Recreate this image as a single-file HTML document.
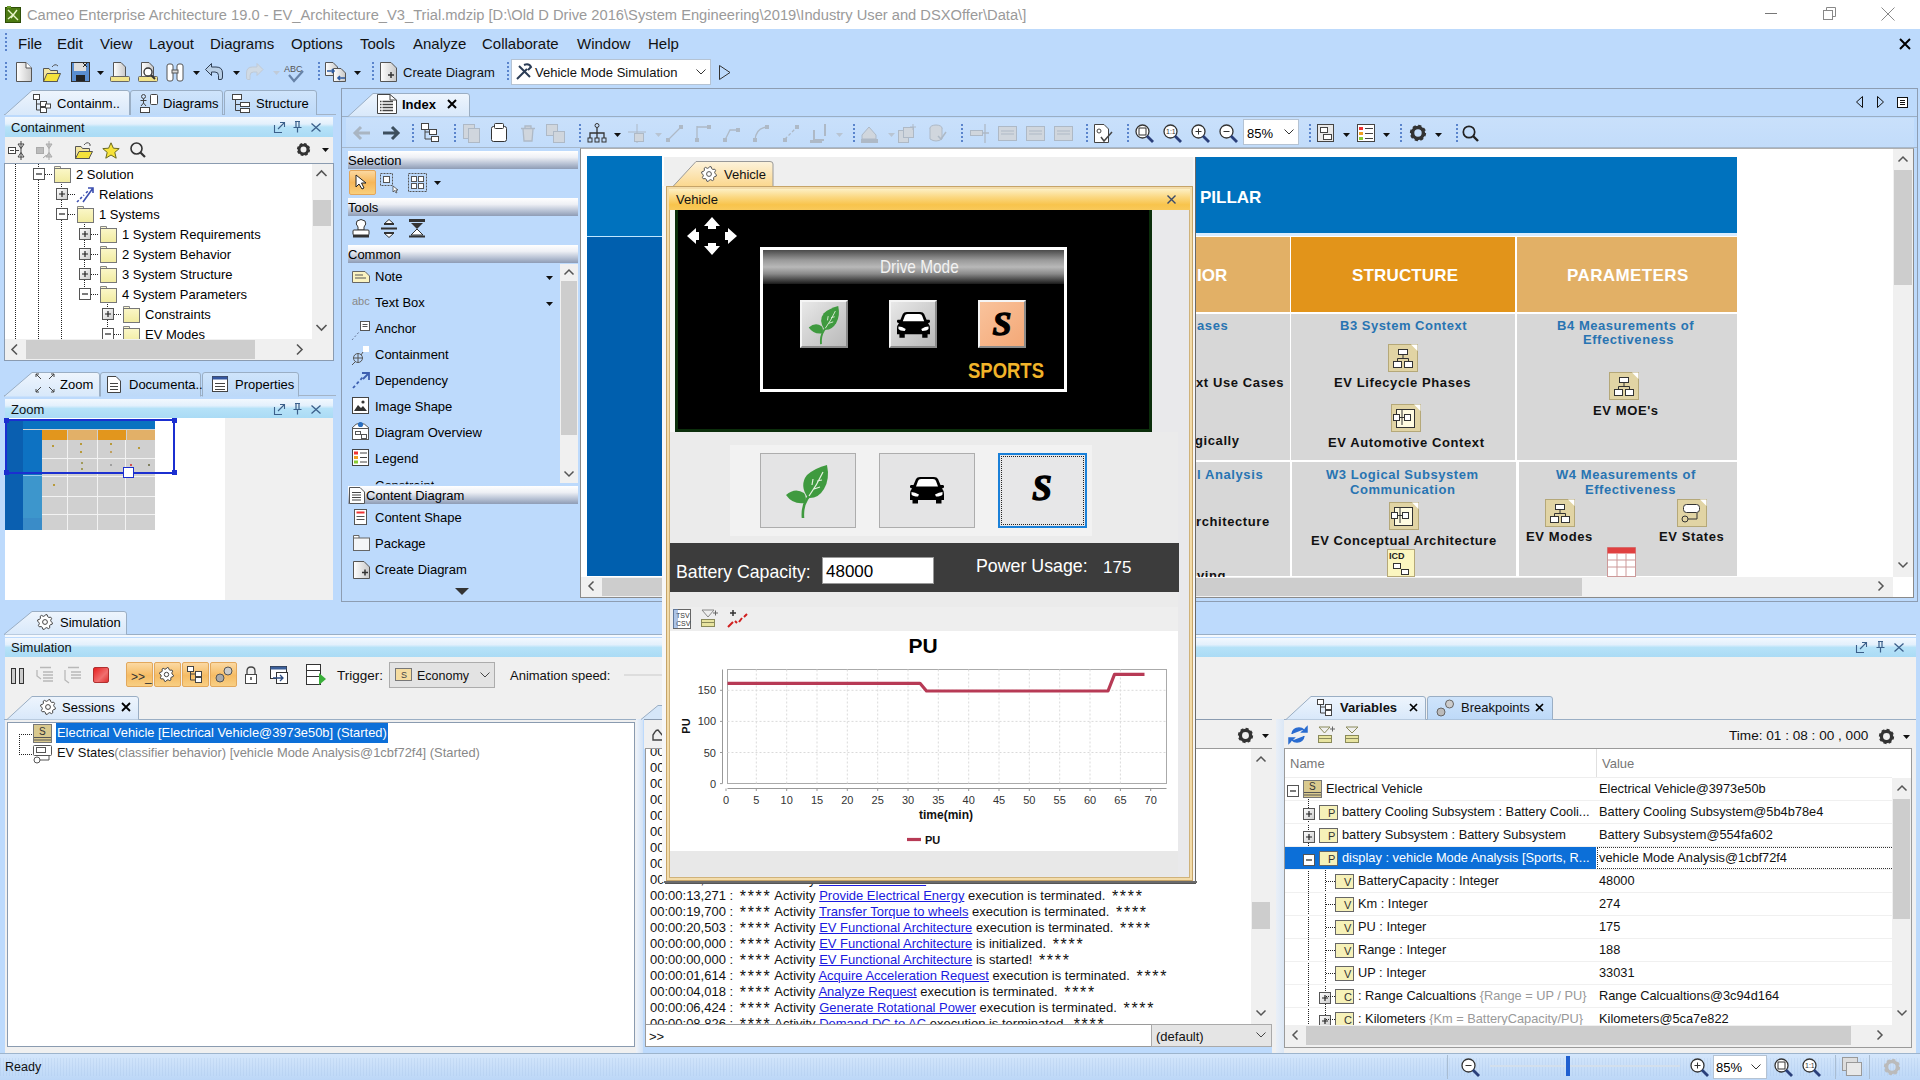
<!DOCTYPE html>
<html><head><meta charset="utf-8">
<style>
*{box-sizing:border-box;margin:0;padding:0}
html,body{width:1920px;height:1080px;overflow:hidden;background:#bddafc;font-family:"Liberation Sans",sans-serif;font-size:13px;color:#000}
.a{position:absolute}
.t{position:absolute;white-space:nowrap;line-height:1}
svg{position:absolute;overflow:visible}
</style></head><body>
<div class="a" style="left:0px;top:0px;width:1920px;height:29px;background:#fff"></div>
<svg style="left:5px;top:6px;" width="16" height="17" viewBox="0 0 16 17"><rect x="0.5" y="1.5" width="15" height="15" fill="#4c7a12" stroke="#2d4d08"/><path d="M3 4 L13 14 M12 4 L6 12 M3 13 L9 8" stroke="#e9f5c9" stroke-width="1.4" fill="none"/><rect x="2" y="0" width="4" height="2" fill="#6a9a2a"/></svg>
<div class="t" style="left:27px;top:7.6px;font-size:14.7px;color:#9a9a9a;">Cameo Enterprise Architecture 19.0 - EV_Architecture_V3_Trial.mdzip [D:\Old D Drive 2016\System Engineering\2019\Industry User and DSXOffer\Data\]</div>
<div class="a" style="left:1765px;top:13px;width:12px;height:1px;background:#777"></div>
<svg style="left:1823px;top:7px;" width="13" height="13" viewBox="0 0 13 13"><rect x="0.5" y="3.5" width="9" height="9" fill="none" stroke="#888"/><path d="M3.5 3.5 V0.5 H12.5 V9.5 H9.5" fill="none" stroke="#888"/></svg>
<svg style="left:1881px;top:7px;" width="14" height="14" viewBox="0 0 14 14"><path d="M0.5 0.5 L13.5 13.5 M13.5 0.5 L0.5 13.5" stroke="#888" stroke-width="1"/></svg>
<div class="a" style="left:0px;top:29px;width:1920px;height:30px;background:#bddafc"></div>
<div class="a" style="left:5px;top:33px;width:2px;height:20px;background:repeating-linear-gradient(#5a84cc 0 2px,transparent 2px 4px)"></div>
<div class="t" style="left:18px;top:36.3px;font-size:15px;color:#111;">File</div>
<div class="t" style="left:57px;top:36.3px;font-size:15px;color:#111;">Edit</div>
<div class="t" style="left:100px;top:36.3px;font-size:15px;color:#111;">View</div>
<div class="t" style="left:149px;top:36.3px;font-size:15px;color:#111;">Layout</div>
<div class="t" style="left:210px;top:36.3px;font-size:15px;color:#111;">Diagrams</div>
<div class="t" style="left:291px;top:36.3px;font-size:15px;color:#111;">Options</div>
<div class="t" style="left:360px;top:36.3px;font-size:15px;color:#111;">Tools</div>
<div class="t" style="left:413px;top:36.3px;font-size:15px;color:#111;">Analyze</div>
<div class="t" style="left:482px;top:36.3px;font-size:15px;color:#111;">Collaborate</div>
<div class="t" style="left:577px;top:36.3px;font-size:15px;color:#111;">Window</div>
<div class="t" style="left:648px;top:36.3px;font-size:15px;color:#111;">Help</div>
<svg style="left:1899px;top:38px;" width="12" height="12" viewBox="0 0 12 12"><path d="M1 1 L11 11 M11 1 L1 11" stroke="#000" stroke-width="2"/></svg>
<svg width="0" height="0" style="position:absolute"><defs><linearGradient id="gdoc" x1="0" x2="1"><stop offset="0" stop-color="#fff"/><stop offset="1" stop-color="#c9c9c9"/></linearGradient><linearGradient id="gfold" x1="0" x2="0" y1="0" y2="1"><stop offset="0" stop-color="#fbf7c8"/><stop offset="1" stop-color="#f1eba0"/></linearGradient></defs></svg>
<div class="a" style="left:5px;top:62px;width:2px;height:19px;background:repeating-linear-gradient(#5a84cc 0 2px,transparent 2px 4px)"></div>
<svg style="left:16px;top:62px;" width="16" height="20" viewBox="0 0 16 20"><path d="M0.5 0.5 H10 L15.5 6 V19.5 H0.5 Z" fill="url(#gdoc)" stroke="#555"/><path d="M10 0.5 V6 H15.5" fill="#fff" stroke="#555"/></svg>
<svg style="left:43px;top:63px;" width="18" height="19" viewBox="0 0 18 19"><path d="M0.5 5.5 H6 L7.5 7.5 H14.5 V18.5 H0.5Z" fill="#f3e6a0" stroke="#555"/><path d="M0.5 18.5 L4 10.5 H17.5 L14 18.5Z" fill="#f5e23c" stroke="#555"/><path d="M9 4 Q12 0 15 3" stroke="#555" fill="none"/></svg>
<svg style="left:71px;top:62px;" width="19" height="20" viewBox="0 0 19 20"><rect x="0.5" y="0.5" width="18" height="19" fill="#5a8ed0" stroke="#333"/><rect x="3" y="1" width="12" height="8" fill="#ddd"/><rect x="5" y="13" width="9" height="6" fill="#222"/><path d="M12 1 L16 5 M16 1 L12 5" stroke="#222"/></svg>
<svg style="left:97px;top:71px;" width="7" height="4" viewBox="0 0 7 4"><path d="M0 0 H7 L3.5 4Z" fill="#111"/></svg>
<svg style="left:110px;top:62px;" width="20" height="20" viewBox="0 0 20 20"><path d="M3.5 0.5 H11 L15.5 5 V15 H3.5Z" fill="url(#gdoc)" stroke="#555"/><rect x="0.5" y="14.5" width="19" height="5" rx="1" fill="#f1e38a" stroke="#666"/></svg>
<svg style="left:138px;top:62px;" width="20" height="20" viewBox="0 0 20 20"><path d="M3.5 0.5 H11 L15.5 5 V15 H3.5Z" fill="url(#gdoc)" stroke="#555"/><rect x="0.5" y="14.5" width="19" height="5" rx="1" fill="#f1e38a" stroke="#666"/><circle cx="10" cy="10" r="4" fill="#fff" stroke="#333" stroke-width="1.3"/><path d="M13 13 L17 17" stroke="#333" stroke-width="2"/></svg>
<svg style="left:166px;top:62px;" width="18" height="20" viewBox="0 0 18 20"><rect x="1" y="2" width="6" height="17" rx="2" fill="#fff" stroke="#555"/><rect x="11" y="2" width="6" height="17" rx="2" fill="#fff" stroke="#555"/><rect x="6" y="8" width="6" height="3" fill="#ddd" stroke="#555"/></svg>
<svg style="left:193px;top:71px;" width="7" height="4" viewBox="0 0 7 4"><path d="M0 0 H7 L3.5 4Z" fill="#111"/></svg>
<svg style="left:205px;top:63px;" width="18" height="17" viewBox="0 0 18 17"><path d="M6.5 0.5 L0.5 6.5 L6.5 12.5 V9 H10 Q13.5 9 13.5 12.5 V16.5 H16 Q17.5 16.5 17.5 14 V10 Q17.5 4 11 4 H6.5Z" fill="#b9cfe6" stroke="#2f3f55" stroke-width="1"/></svg>
<svg style="left:233px;top:71px;" width="7" height="4" viewBox="0 0 7 4"><path d="M0 0 H7 L3.5 4Z" fill="#111"/></svg>
<svg style="left:246px;top:63px;" width="18" height="17" viewBox="0 0 18 17"><path d="M11 0.5 L17 6.5 L11 12.5 V9 H7.5 Q4 9 4 12.5 V16.5 H1.5 Q0.5 16.5 0.5 14 V10 Q0.5 4 6.5 4 H11Z" fill="#d0dae4" stroke="#c0cad6" stroke-width="1"/></svg>
<svg style="left:273px;top:71px;" width="7" height="4" viewBox="0 0 7 4"><path d="M0 0 H7 L3.5 4Z" fill="#c0cbd8"/></svg>
<div class="t" style="left:284px;top:65.4px;font-size:9px;color:#555;">ABC</div>
<svg style="left:288px;top:70px;" width="16" height="12" viewBox="0 0 16 12"><path d="M1 5 L6 11 L15 1" fill="none" stroke="#6783a8" stroke-width="2.2"/></svg>
<div class="a" style="left:318px;top:62px;width:2px;height:19px;background:repeating-linear-gradient(#5a84cc 0 2px,transparent 2px 4px)"></div>
<svg style="left:325px;top:62px;" width="22" height="20" viewBox="0 0 22 20"><path d="M0.5 0.5 H8 L12.5 5 V13.5 H0.5Z" fill="url(#gdoc)" stroke="#555"/><path d="M8.5 6.5 H16 L20.5 11 V19.5 H8.5Z" fill="url(#gdoc)" stroke="#555"/><path d="M2 9 H9 M7 7 L9 9 L7 11" stroke="#2c5aa0" stroke-width="1.6" fill="none"/><path d="M20 16 H13 M15 14 L13 16 L15 18" stroke="#2c5aa0" stroke-width="1.6" fill="none"/></svg>
<svg style="left:354px;top:71px;" width="7" height="4" viewBox="0 0 7 4"><path d="M0 0 H7 L3.5 4Z" fill="#111"/></svg>
<div class="a" style="left:372px;top:62px;width:2px;height:19px;background:repeating-linear-gradient(#5a84cc 0 2px,transparent 2px 4px)"></div>
<svg style="left:380px;top:62px;" width="18" height="20" viewBox="0 0 18 20"><path d="M0.5 0.5 H11 L16.5 6 V19.5 H0.5Z" fill="url(#gdoc)" stroke="#555"/><path d="M8 13 H14 M11 10 V16" stroke="#333" stroke-width="1.5"/></svg>
<div class="t" style="left:403px;top:66.0px;font-size:13px;color:#111;">Create Diagram</div>
<div class="a" style="left:507px;top:62px;width:2px;height:19px;background:repeating-linear-gradient(#5a84cc 0 2px,transparent 2px 4px)"></div>
<div class="a" style="left:511px;top:59px;width:200px;height:26px;background:#fff;border:1px solid #b5c3d3"></div>
<svg style="left:515px;top:63px;" width="18" height="18" viewBox="0 0 18 18"><path d="M2 16 L12 6 M4 3 L15 14 M9 2 Q14 0 16 4 L13 7" stroke="#2b3c55" stroke-width="2" fill="none"/></svg>
<div class="t" style="left:535px;top:66.0px;font-size:13px;color:#111;">Vehicle Mode Simulation</div>
<svg style="left:696px;top:69px;" width="10" height="6" viewBox="0 0 10 6"><path d="M0.5 0.5 L5 5 L9.5 0.5" fill="none" stroke="#333"/></svg>
<svg style="left:719px;top:65px;" width="12" height="15" viewBox="0 0 12 15"><path d="M0.5 0.5 L11 7.5 L0.5 14.5Z" fill="none" stroke="#333"/></svg>
<div class="a" style="left:0px;top:88px;width:342px;height:1px;background:#bddafc"></div>
<svg width="0" height="0" style="position:absolute"><defs><linearGradient id="gtabA" x1="0" x2="0" y1="0" y2="1"><stop offset="0" stop-color="#eef5fd"/><stop offset="1" stop-color="#d8e8fa"/></linearGradient><linearGradient id="gtabI" x1="0" x2="0" y1="0" y2="1"><stop offset="0" stop-color="#cfe4fb"/><stop offset="1" stop-color="#bdd9f8"/></linearGradient><linearGradient id="gtabO" x1="0" x2="0" y1="0" y2="1"><stop offset="0" stop-color="#fdf3dc"/><stop offset="1" stop-color="#fbd68a"/></linearGradient></defs></svg>
<svg width="0" height="0" style="position:absolute"><defs><linearGradient id="gexp" x1="0" x2="1" y1="0" y2="1"><stop offset="0" stop-color="#fff"/><stop offset="1" stop-color="#ccc"/></linearGradient></defs></svg>
<div class="a" style="left:4px;top:114px;width:332px;height:1px;background:#a3b3c6"></div>
<svg style="left:224px;top:90px;" width="94" height="26" viewBox="0 0 94 26"><path d="M0.5 25.5 V3 Q0.5 0.5 3 0.5 H90 Q92.5 0.5 92.5 3 V25.5" fill="url(#gtabI)" stroke="#9aaec4"/></svg>
<svg style="left:130px;top:90px;" width="94" height="26" viewBox="0 0 94 26"><path d="M0.5 25.5 V3 Q0.5 0.5 3 0.5 H90 Q92.5 0.5 92.5 3 V25.5" fill="url(#gtabI)" stroke="#9aaec4"/></svg>
<svg style="left:4px;top:90px;" width="127" height="26" viewBox="0 0 127 26"><path d="M0 25.5 L28 0.5 H123 Q125.5 0.5 125.5 3 V25.5" fill="url(#gtabA)" stroke="#9aaec4"/></svg>
<svg style="left:33px;top:94px;" width="19" height="19" viewBox="0 0 19 19"><rect x="0.5" y="0.5" width="6" height="5" fill="#fff" stroke="#444"/><rect x="7.5" y="7.5" width="6" height="5" fill="#fff" stroke="#444"/><rect x="7.5" y="13.5" width="6" height="5" fill="#fff" stroke="#444"/><path d="M3.5 5.5 V16 H7.5 M3.5 10 H7.5" fill="none" stroke="#444"/><rect x="12.5" y="10" width="5" height="4" fill="#fff" stroke="#444"/></svg>
<div class="t" style="left:57px;top:97.0px;font-size:13px;color:#000;">Containm..</div>
<svg style="left:140px;top:94px;" width="18" height="19" viewBox="0 0 18 19"><circle cx="3.5" cy="2.5" r="2" fill="none" stroke="#444"/><path d="M0.5 6.5 H6.5 M3.5 5 V9 L1 12 M3.5 9 L6 12" fill="none" stroke="#444"/><rect x="10.5" y="0.5" width="7" height="10" rx="1" fill="#fff" stroke="#444"/><rect x="0.5" y="13.5" width="9" height="5" fill="#fff" stroke="#444"/></svg>
<div class="t" style="left:163px;top:97.0px;font-size:13px;color:#000;">Diagrams</div>
<svg style="left:232px;top:94px;" width="19" height="19" viewBox="0 0 19 19"><rect x="0.5" y="0.5" width="9" height="5" fill="#fff" stroke="#444"/><rect x="8.5" y="8.5" width="9" height="4" fill="#fff" stroke="#444"/><rect x="8.5" y="14.5" width="9" height="4" fill="#fff" stroke="#444"/><path d="M3.5 5.5 V16.5 H8.5 M3.5 10.5 H8.5" fill="none" stroke="#444"/></svg>
<div class="t" style="left:256px;top:97.0px;font-size:13px;color:#000;">Structure</div>
<div class="a" style="left:4px;top:115px;width:334px;height:487px;background:#bddafc"></div>
<div class="a" style="left:5px;top:117px;width:328px;height:20px;background:linear-gradient(#f2f8fe,#e3f0fc 35%,#b6e2f8 50%,#aadbf5)"></div><div class="t" style="left:11px;top:120.5px;font-size:13px;color:#111;">Containment</div><svg style="left:274px;top:122px;" width="10" height="10" viewBox="0 0 10 10"><path d="M0.5 3 V10.5 H8 M4 7 L10 1 M6 0.5 H10.5 V5" fill="none" stroke="#3b5f8a" stroke-width="1.1"/></svg><svg style="left:293px;top:121px;" width="9" height="12" viewBox="0 0 9 12"><path d="M2 0.5 H7 M3 0.5 V6 M6 0.5 V6 M0.5 6.5 H8.5 M4.5 6.5 V11.5" fill="none" stroke="#3b5f8a" stroke-width="1.2"/></svg><svg style="left:311px;top:123px;" width="10" height="9" viewBox="0 0 10 9"><path d="M0.5 0.5 L9.5 8.5 M9.5 0.5 L0.5 8.5" stroke="#3b5f8a" stroke-width="1.3"/></svg>
<div class="a" style="left:5px;top:137px;width:328px;height:27px;background:#f0f0f0"></div>
<svg style="left:8px;top:141px;" width="18" height="19" viewBox="0 0 18 19"><rect x="0.5" y="6.5" width="7" height="6" fill="#fff" stroke="#444"/><path d="M2 9.5 H6" stroke="#444"/><path d="M7.5 9.5 H11 M13 0 V19 M10 3 H16 L13 7.5Z M10 16 H16 L13 11.5Z" fill="#fff" stroke="#444"/></svg>
<svg style="left:36px;top:141px;" width="18" height="19" viewBox="0 0 18 19"><rect x="0.5" y="6.5" width="7" height="6" fill="#bbb" stroke="#aaa"/><path d="M13 0 V19 M10 3 H16 L13 7.5Z M10 16 H16 L13 11.5Z M7 17 Q10 13 12 15" fill="#ccc" stroke="#aaa"/></svg>
<svg style="left:75px;top:141px;" width="18" height="18" viewBox="0 0 18 18"><path d="M0.5 5.5 H6 L7.5 7.5 H14.5 V17.5 H0.5Z" fill="#f3e6a0" stroke="#555"/><path d="M0.5 17.5 L4 10.5 H17.5 L14 17.5Z" fill="#f5e23c" stroke="#555"/><path d="M9 4 Q12 0 15 3 V5" stroke="#555" fill="none"/></svg>
<svg style="left:102px;top:142px;" width="18" height="17" viewBox="0 0 18 17"><path d="M9 0.8 L11.4 6.2 L17.2 6.6 L12.8 10.4 L14.2 16.2 L9 13 L3.8 16.2 L5.2 10.4 L0.8 6.6 L6.6 6.2Z" fill="#f7e33a" stroke="#6a6a20"/></svg>
<svg style="left:130px;top:142px;" width="16" height="17" viewBox="0 0 16 17"><circle cx="6.5" cy="6.5" r="5.5" fill="none" stroke="#333" stroke-width="1.6"/><path d="M10.5 10.5 L15 15" stroke="#333" stroke-width="2.2"/></svg>
<svg style="left:297px;top:143px;" width="13" height="13" viewBox="0 0 13 13"><circle cx="6.5" cy="6.5" r="4.42" fill="none" stroke="#333" stroke-width="2.9"/><circle cx="6.5" cy="6.5" r="5.72" fill="none" stroke="#333" stroke-width="1.8" stroke-dasharray="2.60 1.88"/></svg>
<svg style="left:322px;top:148px;" width="7" height="4" viewBox="0 0 7 4"><path d="M0 0 H7 L3.5 4Z" fill="#111"/></svg>
<div class="a" style="left:4px;top:163px;width:330px;height:198px;background:#fff;border:1px solid #8a9bb0"></div>
<div class="a" style="left:15px;top:164px;width:1px;height:175px;background:repeating-linear-gradient(#222 0 1px,transparent 1px 2px)"></div>
<div class="a" style="left:38px;top:164px;width:1px;height:175px;background:repeating-linear-gradient(#222 0 1px,transparent 1px 2px)"></div>
<div class="a" style="left:61px;top:182px;width:1px;height:157px;background:repeating-linear-gradient(#222 0 1px,transparent 1px 2px)"></div>
<div class="a" style="left:84px;top:224px;width:1px;height:76px;background:repeating-linear-gradient(#222 0 1px,transparent 1px 2px)"></div>
<div class="a" style="left:107px;top:304px;width:1px;height:35px;background:repeating-linear-gradient(#222 0 1px,transparent 1px 2px)"></div>
<div class="a" style="left:45px;top:174px;width:7px;height:1px;background:repeating-linear-gradient(90deg,#222 0 1px,transparent 1px 2px)"></div>
<svg style="left:33px;top:168px;" width="12" height="12" viewBox="0 0 12 12"><rect x="0.5" y="0.5" width="11" height="11" fill="#fff" stroke="#555"/><path d="M3 6 H9" stroke="#222" stroke-width="1.2"/></svg>
<svg style="left:54px;top:166px;" width="17" height="17" viewBox="0 0 17 17"><path d="M0.5 2.5 V0.5 H6.5 V2.5" fill="#fbf7d0" stroke="#888"/><rect x="0.5" y="2.5" width="16" height="14" fill="url(#gfold)" stroke="#777"/></svg>
<div class="t" style="left:76px;top:168.0px;font-size:13px;color:#000;">2 Solution</div>
<div class="a" style="left:68px;top:194px;width:7px;height:1px;background:repeating-linear-gradient(90deg,#222 0 1px,transparent 1px 2px)"></div>
<svg style="left:56px;top:188px;" width="12" height="12" viewBox="0 0 12 12"><rect x="0.5" y="0.5" width="11" height="11" fill="url(#gexp)" stroke="#555"/><path d="M3 6 H9 M6 3 V9" stroke="#222" stroke-width="1.2"/></svg>
<svg style="left:76px;top:186px;" width="18" height="17" viewBox="0 0 18 17"><path d="M1 16 L8 9 M10 7 L12 5" stroke="#3c4fb0" stroke-width="1.6" stroke-dasharray="2.5 2"/><path d="M7 16 L17 2 M12 2 H17 V7" stroke="#3c4fb0" stroke-width="1.6" fill="none"/></svg>
<div class="t" style="left:99px;top:188.0px;font-size:13px;color:#000;">Relations</div>
<div class="a" style="left:68px;top:214px;width:7px;height:1px;background:repeating-linear-gradient(90deg,#222 0 1px,transparent 1px 2px)"></div>
<svg style="left:56px;top:208px;" width="12" height="12" viewBox="0 0 12 12"><rect x="0.5" y="0.5" width="11" height="11" fill="#fff" stroke="#555"/><path d="M3 6 H9" stroke="#222" stroke-width="1.2"/></svg>
<svg style="left:77px;top:206px;" width="17" height="17" viewBox="0 0 17 17"><path d="M0.5 2.5 V0.5 H6.5 V2.5" fill="#fbf7d0" stroke="#888"/><rect x="0.5" y="2.5" width="16" height="14" fill="url(#gfold)" stroke="#777"/></svg>
<div class="t" style="left:99px;top:208.0px;font-size:13px;color:#000;">1 Systems</div>
<div class="a" style="left:91px;top:234px;width:7px;height:1px;background:repeating-linear-gradient(90deg,#222 0 1px,transparent 1px 2px)"></div>
<svg style="left:79px;top:228px;" width="12" height="12" viewBox="0 0 12 12"><rect x="0.5" y="0.5" width="11" height="11" fill="url(#gexp)" stroke="#555"/><path d="M3 6 H9 M6 3 V9" stroke="#222" stroke-width="1.2"/></svg>
<svg style="left:100px;top:226px;" width="17" height="17" viewBox="0 0 17 17"><path d="M0.5 2.5 V0.5 H6.5 V2.5" fill="#fbf7d0" stroke="#888"/><rect x="0.5" y="2.5" width="16" height="14" fill="url(#gfold)" stroke="#777"/></svg>
<div class="t" style="left:122px;top:228.0px;font-size:13px;color:#000;">1 System Requirements</div>
<div class="a" style="left:91px;top:254px;width:7px;height:1px;background:repeating-linear-gradient(90deg,#222 0 1px,transparent 1px 2px)"></div>
<svg style="left:79px;top:248px;" width="12" height="12" viewBox="0 0 12 12"><rect x="0.5" y="0.5" width="11" height="11" fill="url(#gexp)" stroke="#555"/><path d="M3 6 H9 M6 3 V9" stroke="#222" stroke-width="1.2"/></svg>
<svg style="left:100px;top:246px;" width="17" height="17" viewBox="0 0 17 17"><path d="M0.5 2.5 V0.5 H6.5 V2.5" fill="#fbf7d0" stroke="#888"/><rect x="0.5" y="2.5" width="16" height="14" fill="url(#gfold)" stroke="#777"/></svg>
<div class="t" style="left:122px;top:248.0px;font-size:13px;color:#000;">2 System Behavior</div>
<div class="a" style="left:91px;top:274px;width:7px;height:1px;background:repeating-linear-gradient(90deg,#222 0 1px,transparent 1px 2px)"></div>
<svg style="left:79px;top:268px;" width="12" height="12" viewBox="0 0 12 12"><rect x="0.5" y="0.5" width="11" height="11" fill="url(#gexp)" stroke="#555"/><path d="M3 6 H9 M6 3 V9" stroke="#222" stroke-width="1.2"/></svg>
<svg style="left:100px;top:266px;" width="17" height="17" viewBox="0 0 17 17"><path d="M0.5 2.5 V0.5 H6.5 V2.5" fill="#fbf7d0" stroke="#888"/><rect x="0.5" y="2.5" width="16" height="14" fill="url(#gfold)" stroke="#777"/></svg>
<div class="t" style="left:122px;top:268.0px;font-size:13px;color:#000;">3 System Structure</div>
<div class="a" style="left:91px;top:294px;width:7px;height:1px;background:repeating-linear-gradient(90deg,#222 0 1px,transparent 1px 2px)"></div>
<svg style="left:79px;top:288px;" width="12" height="12" viewBox="0 0 12 12"><rect x="0.5" y="0.5" width="11" height="11" fill="#fff" stroke="#555"/><path d="M3 6 H9" stroke="#222" stroke-width="1.2"/></svg>
<svg style="left:100px;top:286px;" width="17" height="17" viewBox="0 0 17 17"><path d="M0.5 2.5 V0.5 H6.5 V2.5" fill="#fbf7d0" stroke="#888"/><rect x="0.5" y="2.5" width="16" height="14" fill="url(#gfold)" stroke="#777"/></svg>
<div class="t" style="left:122px;top:288.0px;font-size:13px;color:#000;">4 System Parameters</div>
<div class="a" style="left:114px;top:314px;width:7px;height:1px;background:repeating-linear-gradient(90deg,#222 0 1px,transparent 1px 2px)"></div>
<svg style="left:102px;top:308px;" width="12" height="12" viewBox="0 0 12 12"><rect x="0.5" y="0.5" width="11" height="11" fill="url(#gexp)" stroke="#555"/><path d="M3 6 H9 M6 3 V9" stroke="#222" stroke-width="1.2"/></svg>
<svg style="left:123px;top:306px;" width="17" height="17" viewBox="0 0 17 17"><path d="M0.5 2.5 V0.5 H6.5 V2.5" fill="#fbf7d0" stroke="#888"/><rect x="0.5" y="2.5" width="16" height="14" fill="url(#gfold)" stroke="#777"/></svg>
<div class="t" style="left:145px;top:308.0px;font-size:13px;color:#000;">Constraints</div>
<div class="a" style="left:114px;top:334px;width:7px;height:1px;background:repeating-linear-gradient(90deg,#222 0 1px,transparent 1px 2px)"></div>
<svg style="left:102px;top:328px;" width="12" height="12" viewBox="0 0 12 12"><rect x="0.5" y="0.5" width="11" height="11" fill="#fff" stroke="#555"/><path d="M3 6 H9" stroke="#222" stroke-width="1.2"/></svg>
<svg style="left:123px;top:326px;" width="17" height="17" viewBox="0 0 17 17"><path d="M0.5 2.5 V0.5 H6.5 V2.5" fill="#fbf7d0" stroke="#888"/><rect x="0.5" y="2.5" width="16" height="14" fill="url(#gfold)" stroke="#777"/></svg>
<div class="t" style="left:145px;top:328.0px;font-size:13px;color:#000;">EV Modes</div>
<div class="a" style="left:312px;top:164px;width:21px;height:175px;background:#f0f0f0"></div>
<div class="a" style="left:313px;top:200px;width:18px;height:26px;background:#cdcdcd"></div>
<svg style="left:316px;top:170px;" width="11" height="7" viewBox="0 0 11 7"><path d="M0.5 6 L5.5 1 L10.5 6" fill="none" stroke="#555" stroke-width="1.6"/></svg>
<svg style="left:316px;top:324px;" width="11" height="7" viewBox="0 0 11 7"><path d="M0.5 1 L5.5 6 L10.5 1" fill="none" stroke="#555" stroke-width="1.6"/></svg>
<div class="a" style="left:5px;top:339px;width:328px;height:21px;background:#f0f0f0"></div>
<div class="a" style="left:26px;top:340px;width:229px;height:19px;background:#cdcdcd"></div>
<svg style="left:11px;top:344px;" width="7" height="11" viewBox="0 0 7 11"><path d="M6 0.5 L1 5.5 L6 10.5" fill="none" stroke="#555" stroke-width="1.6"/></svg>
<svg style="left:296px;top:344px;" width="7" height="11" viewBox="0 0 7 11"><path d="M1 0.5 L6 5.5 L1 10.5" fill="none" stroke="#555" stroke-width="1.6"/></svg>
<div class="a" style="left:4px;top:395px;width:332px;height:1px;background:#a3b3c6"></div>
<svg style="left:202px;top:372px;" width="98" height="25" viewBox="0 0 98 25"><path d="M0.5 24.5 V3 Q0.5 0.5 3 0.5 H94 Q96.5 0.5 96.5 3 V24.5" fill="url(#gtabI)" stroke="#9aaec4"/></svg>
<svg style="left:100px;top:372px;" width="102" height="25" viewBox="0 0 102 25"><path d="M0.5 24.5 V3 Q0.5 0.5 3 0.5 H98 Q100.5 0.5 100.5 3 V24.5" fill="url(#gtabI)" stroke="#9aaec4"/></svg>
<svg style="left:4px;top:372px;" width="97" height="25" viewBox="0 0 97 25"><path d="M0 24.5 L28 0.5 H93 Q95.5 0.5 95.5 3 V24.5" fill="url(#gtabA)" stroke="#9aaec4"/></svg>
<svg style="left:35px;top:373px;" width="20" height="20" viewBox="0 0 20 20"><path d="M1 1 L6 6 M1 1 H4 M1 1 V4 M19 1 L14 6 M19 1 H16 M19 1 V4 M1 19 L6 14 M1 19 H4 M1 19 V16 M19 19 L14 14 M19 19 H16 M19 19 V16" stroke="#444" stroke-width="1" fill="none"/></svg>
<div class="t" style="left:60px;top:378.0px;font-size:13px;color:#000;">Zoom</div>
<svg style="left:107px;top:376px;" width="14" height="17" viewBox="0 0 14 17"><path d="M0.5 0.5 H9 L13.5 5 V16.5 H0.5Z" fill="#fff" stroke="#444"/><path d="M3 7.5 H11 M3 10.5 H11 M3 13.5 H11" stroke="#444"/></svg>
<div class="t" style="left:129px;top:378.0px;font-size:13px;color:#000;">Documenta..</div>
<svg style="left:212px;top:376px;" width="16" height="16" viewBox="0 0 16 16"><rect x="0.5" y="0.5" width="15" height="15" fill="#fff" stroke="#444"/><rect x="0.5" y="0.5" width="15" height="3" fill="#3556a0"/><path d="M3 7.5 H13 M3 10.5 H13 M3 13.5 H13" stroke="#444"/></svg>
<div class="t" style="left:235px;top:378.0px;font-size:13px;color:#000;">Properties</div>
<div class="a" style="left:5px;top:399px;width:328px;height:19px;background:linear-gradient(#f2f8fe,#e3f0fc 35%,#b6e2f8 50%,#aadbf5)"></div><div class="t" style="left:11px;top:402.5px;font-size:13px;color:#111;">Zoom</div><svg style="left:274px;top:404px;" width="10" height="10" viewBox="0 0 10 10"><path d="M0.5 3 V10.5 H8 M4 7 L10 1 M6 0.5 H10.5 V5" fill="none" stroke="#3b5f8a" stroke-width="1.1"/></svg><svg style="left:293px;top:403px;" width="9" height="12" viewBox="0 0 9 12"><path d="M2 0.5 H7 M3 0.5 V6 M6 0.5 V6 M0.5 6.5 H8.5 M4.5 6.5 V11.5" fill="none" stroke="#3b5f8a" stroke-width="1.2"/></svg><svg style="left:311px;top:405px;" width="10" height="9" viewBox="0 0 10 9"><path d="M0.5 0.5 L9.5 8.5 M9.5 0.5 L0.5 8.5" stroke="#3b5f8a" stroke-width="1.3"/></svg>
<div class="a" style="left:5px;top:418px;width:328px;height:182px;background:#fff"></div>
<div class="a" style="left:225px;top:418px;width:108px;height:182px;background:#f0f0f0"></div>
<div class="a" style="left:5px;top:419px;width:150px;height:111px;background:#d0d0d0"></div>
<div class="a" style="left:5px;top:419px;width:18px;height:111px;background:#0a5fb0"></div>
<div class="a" style="left:23px;top:419px;width:132px;height:10px;background:#0a72c0"></div>
<div class="a" style="left:23px;top:430px;width:19px;height:100px;background:#0d72c2"></div>
<div class="a" style="left:42px;top:430px;width:25px;height:10px;background:#e2961d"></div>
<div class="a" style="left:68px;top:430px;width:29px;height:10px;background:#e2b068"></div>
<div class="a" style="left:98px;top:430px;width:28px;height:10px;background:#e2961d"></div>
<div class="a" style="left:127px;top:430px;width:28px;height:10px;background:#e2b068"></div>
<div class="a" style="left:23px;top:476px;width:19px;height:54px;background:#3d96cc"></div>
<div class="a" style="left:23px;top:518px;width:19px;height:12px;background:#3a8cc8"></div>
<div class="a" style="left:67px;top:440px;width:1px;height:90px;background:#f2f2f2"></div>
<div class="a" style="left:97px;top:440px;width:1px;height:90px;background:#f2f2f2"></div>
<div class="a" style="left:125px;top:440px;width:1px;height:90px;background:#f2f2f2"></div>
<div class="a" style="left:42px;top:458px;width:113px;height:1px;background:#f2f2f2"></div>
<div class="a" style="left:42px;top:476px;width:113px;height:1px;background:#f2f2f2"></div>
<div class="a" style="left:42px;top:496px;width:113px;height:1px;background:#f2f2f2"></div>
<div class="a" style="left:42px;top:514px;width:113px;height:1px;background:#f2f2f2"></div>
<div class="a" style="left:23px;top:475px;width:19px;height:1px;background:#9cc8ea"></div>
<div class="a" style="left:52px;top:445px;width:2px;height:2px;background:#b89a3a"></div>
<div class="a" style="left:80px;top:443px;width:2px;height:2px;background:#b89a3a"></div>
<div class="a" style="left:80px;top:451px;width:2px;height:2px;background:#b89a3a"></div>
<div class="a" style="left:110px;top:443px;width:2px;height:2px;background:#b89a3a"></div>
<div class="a" style="left:110px;top:451px;width:2px;height:2px;background:#c0a060"></div>
<div class="a" style="left:138px;top:447px;width:2px;height:2px;background:#b89a3a"></div>
<div class="a" style="left:81px;top:462px;width:2px;height:2px;background:#a09a5a"></div>
<div class="a" style="left:81px;top:468px;width:2px;height:2px;background:#a09a5a"></div>
<div class="a" style="left:110px;top:464px;width:2px;height:2px;background:#a0a0a0"></div>
<div class="a" style="left:130px;top:464px;width:2px;height:2px;background:#d05050"></div>
<div class="a" style="left:148px;top:464px;width:2px;height:2px;background:#808060"></div>
<div class="a" style="left:53px;top:484px;width:2px;height:2px;background:#b89a3a"></div>
<div class="a" style="left:5px;top:419px;width:170px;height:55px;border:2px solid #1b2fd0"></div>
<div class="a" style="left:4px;top:418px;width:5px;height:5px;background:#1b2fd0"></div>
<div class="a" style="left:172px;top:418px;width:5px;height:5px;background:#1b2fd0"></div>
<div class="a" style="left:4px;top:470px;width:5px;height:5px;background:#1b2fd0"></div>
<div class="a" style="left:172px;top:470px;width:5px;height:5px;background:#1b2fd0"></div>
<div class="a" style="left:123px;top:467px;width:11px;height:11px;background:#fff;border:1px solid #1b2fd0"></div>
<div class="a" style="left:341px;top:88px;width:1577px;height:514px;background:#bddafc;border:1px solid #8d9db2"></div>
<div class="a" style="left:342px;top:116px;width:1575px;height:1px;background:#9aaec4"></div>
<svg style="left:348px;top:93px;" width="123" height="24" viewBox="0 0 123 24"><path d="M0 23.5 L25 0.5 H119 Q121.5 0.5 121.5 3 V23.5" fill="url(#gtabA)" stroke="#9aaec4"/></svg>
<svg style="left:377px;top:94px;" width="20" height="20" viewBox="0 0 20 20"><path d="M0.5 0.5 H13 L19.5 6 V19.5 H0.5Z" fill="#fff" stroke="#444"/><path d="M13 0.5 V6 H19.5" fill="none" stroke="#444"/><path d="M3 7.5 H16 M3 10.5 H16 M3 13.5 H16 M3 16.5 H16" stroke="#444" stroke-width="1.5" stroke-dasharray="1.5 1 12"/></svg>
<div class="t" style="left:402px;top:98.0px;font-size:13px;color:#000;font-weight:bold;">Index</div>
<svg style="left:447px;top:99px;" width="10" height="10" viewBox="0 0 10 10"><path d="M1 1 L9 9 M9 1 L1 9" stroke="#000" stroke-width="2"/></svg>
<svg style="left:1856px;top:96px;" width="7" height="12" viewBox="0 0 7 12"><path d="M6.5 0.5 V11.5 L0.5 6Z" fill="none" stroke="#111"/></svg>
<svg style="left:1877px;top:96px;" width="7" height="12" viewBox="0 0 7 12"><path d="M0.5 0.5 V11.5 L6.5 6Z" fill="none" stroke="#111"/></svg>
<svg style="left:1897px;top:97px;" width="12" height="11" viewBox="0 0 12 11"><rect x="0.5" y="0.5" width="10" height="10" fill="#fff" stroke="#111"/><path d="M3 3.5 H8 M3 5.5 H8 M3 7.5 H8" stroke="#111"/></svg>
<div class="a" style="left:346px;top:118px;width:1568px;height:29px;background:linear-gradient(#c9e0fb,#c2dcfa)"></div>
<svg style="left:354px;top:126px;" width="17" height="14" viewBox="0 0 17 14"><path d="M7 1 L1 7 L7 13 M1 7 H16" fill="none" stroke="#a9b5c2" stroke-width="3"/></svg>
<svg style="left:382px;top:126px;" width="17" height="14" viewBox="0 0 17 14"><path d="M10 1 L16 7 L10 13 M16 7 H1" fill="none" stroke="#3d4f5e" stroke-width="3"/></svg>
<div class="a" style="left:412px;top:124px;width:2px;height:20px;background:repeating-linear-gradient(#5a84cc 0 2px,transparent 2px 4px)"></div>
<svg style="left:421px;top:123px;" width="19" height="19" viewBox="0 0 19 19"><rect x="0.5" y="0.5" width="7" height="6" fill="#fff" stroke="#444"/><rect x="8.5" y="6.5" width="7" height="5" fill="#fff" stroke="#444"/><rect x="10.5" y="13.5" width="7" height="5" fill="#fff" stroke="#444"/><path d="M4 6.5 V16 H10.5 M4 9 H8.5" fill="none" stroke="#444"/></svg>
<div class="a" style="left:454px;top:124px;width:2px;height:20px;background:repeating-linear-gradient(#5a84cc 0 2px,transparent 2px 4px)"></div>
<svg style="left:463px;top:124px;" width="17" height="19" viewBox="0 0 17 19"><rect x="0.5" y="0.5" width="11" height="14" fill="#d0d6dd" stroke="#aeb9c6"/><rect x="5.5" y="4.5" width="11" height="14" fill="#d0d6dd" stroke="#aeb9c6"/></svg>
<svg style="left:491px;top:123px;" width="16" height="19" viewBox="0 0 16 19"><rect x="0.5" y="3.5" width="15" height="15" rx="2" fill="#fff" stroke="#333"/><rect x="3.5" y="0.5" width="9" height="5" rx="1" fill="#fff" stroke="#333"/></svg>
<svg style="left:520px;top:125px;" width="16" height="17" viewBox="0 0 16 17"><path d="M1 3.5 H15 M5 3 V1 H11 V3 M3 4 L4 16 H12 L13 4" fill="#d0d6dd" stroke="#aeb9c6" stroke-width="1.3"/></svg>
<svg style="left:546px;top:124px;" width="19" height="19" viewBox="0 0 19 19"><rect x="0.5" y="0.5" width="11" height="11" fill="#d0d6dd" stroke="#aeb9c6"/><rect x="7.5" y="7.5" width="11" height="11" fill="#d0d6dd" stroke="#aeb9c6"/></svg>
<div class="a" style="left:579px;top:124px;width:2px;height:20px;background:repeating-linear-gradient(#5a84cc 0 2px,transparent 2px 4px)"></div>
<svg style="left:587px;top:123px;" width="20" height="20" viewBox="0 0 20 20"><circle cx="10" cy="2.5" r="2" fill="none" stroke="#333"/><path d="M10 4.5 V9 M3 15 V10 H17 V15 M10 9 V15" fill="none" stroke="#333" stroke-width="1.3"/><rect x="1" y="15" width="4" height="4" fill="none" stroke="#333"/><rect x="8" y="15" width="4" height="4" fill="none" stroke="#333"/><rect x="15" y="15" width="4" height="4" fill="none" stroke="#333"/></svg>
<svg style="left:614px;top:133px;" width="7" height="4" viewBox="0 0 7 4"><path d="M0 0 H7 L3.5 4Z" fill="#111"/></svg>
<svg style="left:627px;top:124px;" width="20" height="19" viewBox="0 0 20 19"><path d="M10 0 V19 M1 8 H19" stroke="#aeb9c6"/><rect x="7.5" y="9.5" width="9" height="8" fill="#d0d6dd" stroke="#aeb9c6"/></svg>
<svg style="left:655px;top:133px;" width="7" height="4" viewBox="0 0 7 4"><path d="M0 0 H7 L3.5 4Z" fill="#b8c4d2"/></svg>
<svg style="left:666px;top:124px;" width="17" height="18" viewBox="0 0 17 18"><path d="M2 16 L15 3" stroke="#aeb9c6" stroke-width="1.3"/><rect x="0" y="14" width="4" height="4" fill="#aeb9c6"/><rect x="13" y="1" width="4" height="4" fill="#aeb9c6"/></svg>
<svg style="left:694px;top:124px;" width="18" height="18" viewBox="0 0 18 18"><path d="M3 2 V16 M3 3 H15" stroke="#aeb9c6" stroke-width="1.3"/><rect x="1" y="14" width="4" height="4" fill="#aeb9c6"/><rect x="13" y="1" width="4" height="4" fill="#aeb9c6"/></svg>
<svg style="left:722px;top:124px;" width="19" height="18" viewBox="0 0 19 18"><path d="M3 16 L8 6 H16" stroke="#aeb9c6" stroke-width="1.3" fill="none"/><rect x="1" y="14" width="4" height="4" fill="#aeb9c6"/><rect x="14" y="4" width="4" height="4" fill="#aeb9c6"/></svg>
<svg style="left:752px;top:124px;" width="18" height="18" viewBox="0 0 18 18"><path d="M3 16 Q4 4 15 3" stroke="#aeb9c6" stroke-width="1.3" fill="none"/><rect x="1" y="14" width="4" height="4" fill="#aeb9c6"/><rect x="13" y="1" width="4" height="4" fill="#aeb9c6"/></svg>
<svg style="left:782px;top:124px;" width="18" height="18" viewBox="0 0 18 18"><path d="M3 15 L15 3" stroke="#aeb9c6" stroke-width="1.3" stroke-dasharray="3 2"/><rect x="1" y="14" width="4" height="4" fill="#aeb9c6"/><rect x="13" y="1" width="4" height="4" fill="#aeb9c6"/></svg>
<svg style="left:810px;top:124px;" width="20" height="19" viewBox="0 0 20 19"><path d="M15 0 V12 M4 6 V16 H14" stroke="#aeb9c6" stroke-width="2" fill="none"/><rect x="0" y="16" width="12" height="3" fill="#aeb9c6"/></svg>
<svg style="left:836px;top:133px;" width="7" height="4" viewBox="0 0 7 4"><path d="M0 0 H7 L3.5 4Z" fill="#b8c4d2"/></svg>
<div class="a" style="left:853px;top:124px;width:2px;height:20px;background:repeating-linear-gradient(#5a84cc 0 2px,transparent 2px 4px)"></div>
<svg style="left:861px;top:124px;" width="20" height="19" viewBox="0 0 20 19"><path d="M1 11 L8 3 L15 11 V15 H1Z" fill="#d0d6dd" stroke="#aeb9c6"/><rect x="0" y="15" width="17" height="4" fill="#aeb9c6"/></svg>
<svg style="left:888px;top:133px;" width="7" height="4" viewBox="0 0 7 4"><path d="M0 0 H7 L3.5 4Z" fill="#b8c4d2"/></svg>
<svg style="left:898px;top:124px;" width="19" height="19" viewBox="0 0 19 19"><rect x="0.5" y="6.5" width="10" height="12" fill="#d0d6dd" stroke="#aeb9c6"/><rect x="5.5" y="3.5" width="10" height="10" fill="#d0d6dd" stroke="#aeb9c6"/><path d="M15 0 V6 M12 3 H18" stroke="#aeb9c6"/></svg>
<svg style="left:928px;top:124px;" width="19" height="19" viewBox="0 0 19 19"><ellipse cx="8" cy="4" rx="6" ry="3" fill="#d0d6dd" stroke="#aeb9c6"/><path d="M2 4 V15 Q8 19 14 15 V4" fill="#d0d6dd" stroke="#aeb9c6"/><path d="M10 12 L13 15 L18 8" stroke="#aeb9c6" stroke-width="1.5" fill="none"/></svg>
<div class="a" style="left:961px;top:124px;width:2px;height:20px;background:repeating-linear-gradient(#5a84cc 0 2px,transparent 2px 4px)"></div>
<svg style="left:970px;top:124px;" width="20" height="19" viewBox="0 0 20 19"><rect x="0.5" y="6.5" width="12" height="5" fill="#d0d6dd" stroke="#aeb9c6"/><path d="M15 0 V19 M12 9 H19" stroke="#aeb9c6" stroke-width="1.3"/></svg>
<svg style="left:998px;top:124px;" width="19" height="19" viewBox="0 0 19 19"><rect x="0.5" y="2.5" width="18" height="14" fill="#d0d6dd" stroke="#aeb9c6"/><path d="M3 7 H16 M3 10 H16" stroke="#aeb9c6"/></svg>
<svg style="left:1026px;top:124px;" width="19" height="19" viewBox="0 0 19 19"><rect x="0.5" y="2.5" width="18" height="14" fill="#d0d6dd" stroke="#aeb9c6"/><path d="M3 7 H16 M3 10 H16" stroke="#aeb9c6"/></svg>
<svg style="left:1054px;top:124px;" width="19" height="19" viewBox="0 0 19 19"><rect x="0.5" y="2.5" width="18" height="14" fill="#d0d6dd" stroke="#aeb9c6"/><path d="M3 7 H16 M3 10 H16" stroke="#aeb9c6"/></svg>
<div class="a" style="left:1086px;top:124px;width:2px;height:20px;background:repeating-linear-gradient(#5a84cc 0 2px,transparent 2px 4px)"></div>
<svg style="left:1094px;top:124px;" width="19" height="19" viewBox="0 0 19 19"><path d="M0.5 0.5 H10 L14.5 5 V18.5 H0.5Z" fill="#fff" stroke="#444"/><circle cx="5" cy="7" r="2" fill="none" stroke="#444"/><path d="M7 13 L10 17 L18 8" fill="none" stroke="#444" stroke-width="1.5"/></svg>
<div class="a" style="left:1127px;top:124px;width:2px;height:20px;background:repeating-linear-gradient(#5a84cc 0 2px,transparent 2px 4px)"></div>
<svg style="left:1135px;top:124px;" width="19" height="19" viewBox="0 0 19 19"><circle cx="7.5" cy="7.5" r="6.5" fill="#fff" stroke="#333" stroke-width="1.3"/><path d="M12 12 L18 18" stroke="#2a3f7a" stroke-width="2.8"/><rect x="4" y="4" width="7" height="7" fill="none" stroke="#333"/></svg>
<svg style="left:1163px;top:124px;" width="19" height="19" viewBox="0 0 19 19"><circle cx="7.5" cy="7.5" r="6.5" fill="#fff" stroke="#333" stroke-width="1.3"/><path d="M12 12 L18 18" stroke="#2a3f7a" stroke-width="2.8"/><text x="3" y="10" font-size="7" font-family="Liberation Sans" fill="#333">1:1</text></svg>
<svg style="left:1191px;top:124px;" width="19" height="19" viewBox="0 0 19 19"><circle cx="7.5" cy="7.5" r="6.5" fill="#fff" stroke="#333" stroke-width="1.3"/><path d="M12 12 L18 18" stroke="#2a3f7a" stroke-width="2.8"/><path d="M4.5 7.5 H10.5 M7.5 4.5 V10.5" stroke="#333"/></svg>
<svg style="left:1219px;top:124px;" width="19" height="19" viewBox="0 0 19 19"><circle cx="7.5" cy="7.5" r="6.5" fill="#fff" stroke="#333" stroke-width="1.3"/><path d="M12 12 L18 18" stroke="#2a3f7a" stroke-width="2.8"/><path d="M4.5 7.5 H10.5" stroke="#333"/></svg>
<div class="a" style="left:1243px;top:119px;width:56px;height:26px;background:#fff;border:1px solid #b5c3d3"></div>
<div class="t" style="left:1247px;top:127.0px;font-size:13px;color:#000;">85%</div>
<svg style="left:1284px;top:129px;" width="10" height="6" viewBox="0 0 10 6"><path d="M0.5 0.5 L5 5 L9.5 0.5" fill="none" stroke="#333"/></svg>
<div class="a" style="left:1309px;top:124px;width:2px;height:20px;background:repeating-linear-gradient(#5a84cc 0 2px,transparent 2px 4px)"></div>
<svg style="left:1317px;top:124px;" width="18" height="19" viewBox="0 0 18 19"><rect x="0.5" y="0.5" width="16" height="17" fill="#e8e8e8" stroke="#444"/><rect x="3.5" y="3.5" width="7" height="5" fill="#fff" stroke="#444"/><rect x="6.5" y="10.5" width="8" height="5" fill="#fff" stroke="#444"/></svg>
<svg style="left:1343px;top:133px;" width="7" height="4" viewBox="0 0 7 4"><path d="M0 0 H7 L3.5 4Z" fill="#111"/></svg>
<svg style="left:1357px;top:124px;" width="19" height="19" viewBox="0 0 19 19"><rect x="0.5" y="0.5" width="17" height="17" fill="#fff" stroke="#444"/><rect x="2" y="3" width="4" height="3" fill="#e33"/><rect x="2" y="8" width="4" height="3" fill="#f0a020"/><rect x="2" y="13" width="4" height="3" fill="#8c3"/><path d="M8 4.5 H16 M8 9.5 H16 M8 14.5 H16" stroke="#444"/></svg>
<svg style="left:1383px;top:133px;" width="7" height="4" viewBox="0 0 7 4"><path d="M0 0 H7 L3.5 4Z" fill="#111"/></svg>
<div class="a" style="left:1400px;top:124px;width:2px;height:20px;background:repeating-linear-gradient(#5a84cc 0 2px,transparent 2px 4px)"></div>
<svg style="left:1410px;top:125px;" width="16" height="16" viewBox="0 0 16 16"><circle cx="8.0" cy="8.0" r="5.44" fill="none" stroke="#333" stroke-width="3.5"/><circle cx="8.0" cy="8.0" r="7.04" fill="none" stroke="#333" stroke-width="2.2" stroke-dasharray="3.20 2.32"/></svg>
<svg style="left:1435px;top:133px;" width="7" height="4" viewBox="0 0 7 4"><path d="M0 0 H7 L3.5 4Z" fill="#111"/></svg>
<div class="a" style="left:1456px;top:124px;width:2px;height:20px;background:repeating-linear-gradient(#5a84cc 0 2px,transparent 2px 4px)"></div>
<svg style="left:1462px;top:125px;" width="17" height="17" viewBox="0 0 17 17"><circle cx="7" cy="7" r="5.7" fill="none" stroke="#222" stroke-width="1.7"/><path d="M11 11 L16 16" stroke="#222" stroke-width="2.4"/></svg>
<div class="a" style="left:342px;top:147px;width:1575px;height:1px;background:#a6b8cc"></div>
<div class="a" style="left:348px;top:151px;width:230px;height:18px;background:linear-gradient(#ffffff,#eef0f5 35%,#b9c3d5 70%,#8e9cb5)"></div><div class="t" style="left:348px;top:154.0px;font-size:13px;color:#000;">Selection</div>
<div class="a" style="left:349px;top:170px;width:27px;height:25px;background:linear-gradient(#fbd8a0,#f6b75a 50%,#f9cf7c);border:1px solid #e3a65a;border-radius:2px"></div>
<svg style="left:355px;top:174px;" width="12" height="16" viewBox="0 0 12 16"><path d="M1 1 V13 L4 10 L7 15 L9 14 L6.5 9 H11Z" fill="#fff" stroke="#222" stroke-width="1"/></svg>
<svg style="left:380px;top:173px;" width="20" height="20" viewBox="0 0 20 20"><rect x="0.5" y="0.5" width="12" height="12" fill="none" stroke="#555" stroke-dasharray="2 1"/><rect x="3.5" y="3.5" width="6" height="6" fill="#fff" stroke="#555"/><path d="M13 13 V19 L14.5 17.5 L16 20 L17 19.5 L15.8 17 H18Z" fill="#fff" stroke="#333" stroke-width=".7"/></svg>
<svg style="left:408px;top:173px;" width="19" height="19" viewBox="0 0 19 19"><rect x="0.5" y="0.5" width="18" height="18" fill="none" stroke="#555" stroke-dasharray="2 1"/><rect x="3.5" y="3.5" width="5" height="5" fill="#fff" stroke="#555"/><rect x="10.5" y="3.5" width="5" height="5" fill="#fff" stroke="#555"/><rect x="3.5" y="10.5" width="5" height="5" fill="#fff" stroke="#555"/><rect x="10.5" y="10.5" width="5" height="5" fill="#fff" stroke="#555"/></svg>
<svg style="left:434px;top:181px;" width="7" height="4" viewBox="0 0 7 4"><path d="M0 0 H7 L3.5 4Z" fill="#111"/></svg>
<div class="a" style="left:348px;top:198px;width:230px;height:18px;background:linear-gradient(#ffffff,#eef0f5 35%,#b9c3d5 70%,#8e9cb5)"></div><div class="t" style="left:348px;top:201.0px;font-size:13px;color:#000;">Tools</div>
<svg style="left:352px;top:219px;" width="18" height="19" viewBox="0 0 18 19"><path d="M6 8 Q3 5 5 2 Q9 -1 13 2 Q15 5 12 8 V11 H6Z" fill="#fff" stroke="#333"/><rect x="1" y="11" width="16" height="5" rx="1" fill="#fff" stroke="#333"/><rect x="1" y="16" width="16" height="2.5" fill="#333"/></svg>
<svg style="left:380px;top:219px;" width="18" height="19" viewBox="0 0 18 19"><path d="M1 9.5 H17" stroke="#333" stroke-width="2"/><path d="M9 0.5 L4 5 H14Z M9 18.5 L4 14 H14Z" fill="#fff" stroke="#333"/><path d="M4 5 H14 M4 14 H14" stroke="#333" stroke-width="2"/></svg>
<svg style="left:408px;top:219px;" width="18" height="19" viewBox="0 0 18 19"><path d="M1 1.5 H17" stroke="#333" stroke-width="3"/><path d="M1 17.5 H17" stroke="#333" stroke-width="2"/><path d="M3 4 H15 L9 10Z" fill="#333"/><path d="M9 10 L3 16 H15Z" fill="#fff" stroke="#333"/></svg>
<div class="a" style="left:348px;top:245px;width:230px;height:18px;background:linear-gradient(#ffffff,#eef0f5 35%,#b9c3d5 70%,#8e9cb5)"></div><div class="t" style="left:348px;top:248.0px;font-size:13px;color:#000;">Common</div>
<div class="t" style="left:375px;top:270.0px;font-size:13px;color:#000;">Note</div>
<div class="t" style="left:375px;top:296.0px;font-size:13px;color:#000;">Text Box</div>
<div class="t" style="left:375px;top:322.0px;font-size:13px;color:#000;">Anchor</div>
<div class="t" style="left:375px;top:348.0px;font-size:13px;color:#000;">Containment</div>
<div class="t" style="left:375px;top:374.0px;font-size:13px;color:#000;">Dependency</div>
<div class="t" style="left:375px;top:400.0px;font-size:13px;color:#000;">Image Shape</div>
<div class="t" style="left:375px;top:426.0px;font-size:13px;color:#000;">Diagram Overview</div>
<div class="t" style="left:375px;top:452.0px;font-size:13px;color:#000;">Legend</div>
<svg style="left:352px;top:271px;" width="18" height="12" viewBox="0 0 18 12"><path d="M0.5 0.5 H13 L17.5 5 V11.5 H0.5Z" fill="#fbf3c0" stroke="#666"/><path d="M3 4 H11 M3 7 H14" stroke="#555"/></svg>
<svg style="left:546px;top:276px;" width="7" height="4" viewBox="0 0 7 4"><path d="M0 0 H7 L3.5 4Z" fill="#111"/></svg>
<svg style="left:546px;top:302px;" width="7" height="4" viewBox="0 0 7 4"><path d="M0 0 H7 L3.5 4Z" fill="#111"/></svg>
<div class="t" style="left:352px;top:295.7px;font-size:11px;color:#888;">abc</div>
<svg style="left:351px;top:321px;" width="19" height="20" viewBox="0 0 19 20"><rect x="9.5" y="0.5" width="9" height="9" fill="#fff" stroke="#555"/><path d="M11.5 3.5 H16.5 M11.5 5.5 H16.5" stroke="#555"/><path d="M1 19 L8 11" stroke="#6a7a9a" stroke-dasharray="2 2"/></svg>
<svg style="left:351px;top:346px;" width="19" height="20" viewBox="0 0 19 20"><rect x="12" y="0" width="6" height="6" fill="#fff"/><circle cx="7" cy="12" r="4.5" fill="none" stroke="#555"/><path d="M2.5 12 H11.5 M7 7.5 V16.5 M1 19 L4 16 M10 9 L12 6" stroke="#555"/></svg>
<svg style="left:352px;top:372px;" width="18" height="17" viewBox="0 0 18 17"><path d="M1 16 L11 5" stroke="#3d5fb0" stroke-width="1.8" stroke-dasharray="3 2.5"/><path d="M10 1 H17 V8 M17 1 L11 7" stroke="#3d5fb0" stroke-width="1.8" fill="none"/></svg>
<svg style="left:352px;top:397px;" width="17" height="17" viewBox="0 0 17 17"><rect x="0.5" y="0.5" width="16" height="16" fill="#fff" stroke="#444"/><path d="M2 14 L6 8 L9 11 L11 9 L15 14Z" fill="#333"/><circle cx="11" cy="5" r="1.6" fill="#333"/></svg>
<svg style="left:351px;top:420px;" width="19" height="20" viewBox="0 0 19 20"><path d="M1 8 Q9 -2 18 8" fill="#fff" stroke="#555"/><circle cx="9.5" cy="4.5" r="2.6" fill="#2a6fc0"/><rect x="1.5" y="8.5" width="16" height="11" fill="#fff" stroke="#555"/><rect x="4.5" y="11.5" width="5" height="3" fill="none" stroke="#555"/><rect x="10.5" y="14.5" width="5" height="4" fill="none" stroke="#555"/></svg>
<svg style="left:352px;top:449px;" width="17" height="17" viewBox="0 0 17 17"><rect x="0.5" y="0.5" width="16" height="16" fill="#fff" stroke="#444"/><rect x="2" y="2.5" width="4" height="3" fill="#e33"/><rect x="2" y="7" width="4" height="3" fill="#f0a020"/><rect x="2" y="11.5" width="4" height="3" fill="#8c3"/><path d="M8 4 H15 M8 8.5 H15 M8 13 H15" stroke="#444"/></svg>
<div class="a" style="left:346px;top:476px;width:214px;height:7px;background:#bddafc"></div>
<div class="t" style="left:375px;top:479.0px;font-size:13px;color:#000;clip-path:inset(0 0 60% 0)">Constraint</div>
<div class="a" style="left:560px;top:264px;width:18px;height:219px;background:#f0f0f0"></div>
<div class="a" style="left:561px;top:281px;width:16px;height:154px;background:#cdcdcd"></div>
<svg style="left:564px;top:269px;" width="10" height="6" viewBox="0 0 10 6"><path d="M0.5 5.5 L5 1 L9.5 5.5" fill="none" stroke="#555" stroke-width="1.5"/></svg>
<svg style="left:564px;top:471px;" width="10" height="6" viewBox="0 0 10 6"><path d="M0.5 0.5 L5 5 L9.5 0.5" fill="none" stroke="#555" stroke-width="1.5"/></svg>
<div class="a" style="left:348px;top:486px;width:230px;height:18px;background:linear-gradient(#ffffff,#eef0f5 35%,#b9c3d5 70%,#8e9cb5)"></div><div class="t" style="left:348px;top:489.0px;font-size:13px;color:#000;">&nbsp;&nbsp;&nbsp;&nbsp;&nbsp;Content Diagram</div>
<svg style="left:349px;top:487px;" width="16" height="17" viewBox="0 0 16 17"><path d="M0.5 0.5 H11 L15.5 5 V16.5 H0.5Z" fill="#fff" stroke="#555"/><path d="M3 5.5 H12 M3 8 H12 M3 10.5 H12 M3 13 H12" stroke="#444"/></svg>
<div class="t" style="left:375px;top:511.0px;font-size:13px;color:#000;">Content Shape</div>
<div class="t" style="left:375px;top:537.0px;font-size:13px;color:#000;">Package</div>
<div class="t" style="left:375px;top:563.0px;font-size:13px;color:#000;">Create Diagram</div>
<svg style="left:354px;top:509px;" width="13" height="16" viewBox="0 0 13 16"><rect x="0.5" y="0.5" width="12" height="15" fill="#fff" stroke="#555"/><rect x="2.5" y="2.5" width="8" height="2" fill="#e33"/><path d="M2.5 7.5 H10.5 M2.5 10.5 H10.5" stroke="#555"/></svg>
<svg style="left:353px;top:535px;" width="17" height="16" viewBox="0 0 17 16"><path d="M0.5 3 V0.5 H6 V3" fill="#fff" stroke="#666"/><rect x="0.5" y="3" width="16" height="12.5" fill="#f4f6f8" stroke="#666"/></svg>
<svg style="left:353px;top:561px;" width="17" height="18" viewBox="0 0 17 18"><path d="M0.5 0.5 H11 L16.5 6 V17.5 H0.5Z" fill="url(#gdoc)" stroke="#555"/><path d="M9 11.5 H15 M12 8.5 V14.5" stroke="#333" stroke-width="1.5"/></svg>
<svg style="left:455px;top:588px;" width="14" height="7" viewBox="0 0 14 7"><path d="M0 0 H14 L7 7Z" fill="#333"/></svg>
<div class="a" style="left:580px;top:148px;width:1313px;height:431px;background:#fff;border-left:1px solid #a0a0a0"></div>
<div class="a" style="left:1893px;top:148px;width:20px;height:429px;background:#f0f0f0"></div>
<div class="a" style="left:1894px;top:170px;width:18px;height:115px;background:#cdcdcd"></div>
<svg style="left:1898px;top:156px;" width="10" height="6" viewBox="0 0 10 6"><path d="M0.5 5.5 L5 1 L9.5 5.5" fill="none" stroke="#555" stroke-width="1.5"/></svg>
<svg style="left:1898px;top:562px;" width="10" height="6" viewBox="0 0 10 6"><path d="M0.5 0.5 L5 5 L9.5 0.5" fill="none" stroke="#555" stroke-width="1.5"/></svg>
<div class="a" style="left:587px;top:156px;width:75px;height:80px;background:#0072be"></div>
<div class="a" style="left:587px;top:236px;width:75px;height:1px;background:#bfe6ff"></div>
<div class="a" style="left:587px;top:237px;width:75px;height:339px;background:#005fae"></div>
<div class="a" style="left:1193px;top:157px;width:544px;height:76px;background:#0072be"></div>
<div class="a" style="left:1193px;top:233px;width:544px;height:3px;background:#d8ecff"></div>
<div class="t" style="left:1200px;top:188.6px;font-size:17px;color:#fff;font-weight:bold;">PILLAR</div>
<div class="a" style="left:1193px;top:237px;width:97px;height:75px;background:#e2b066"></div>
<div class="a" style="left:1291px;top:237px;width:224px;height:75px;background:#e2941a"></div>
<div class="a" style="left:1517px;top:237px;width:220px;height:75px;background:#e2b066"></div>
<div class="t" style="left:1197px;top:267.1px;font-size:17px;color:#fff;font-weight:bold;">IOR</div>
<div class="t" style="left:1352px;top:267.1px;font-size:17px;color:#fff;font-weight:bold;letter-spacing:0.15px">STRUCTURE</div>
<div class="t" style="left:1567px;top:267.1px;font-size:17px;color:#fff;font-weight:bold;letter-spacing:0.4px">PARAMETERS</div>
<div class="a" style="left:1193px;top:312px;width:544px;height:2px;background:#fff"></div>
<div class="a" style="left:1193px;top:314px;width:97px;height:146px;background:#d7d7d7"></div>
<div class="a" style="left:1291px;top:314px;width:224px;height:146px;background:#d7d7d7"></div>
<div class="a" style="left:1517px;top:314px;width:220px;height:146px;background:#d7d7d7"></div>
<div class="a" style="left:1193px;top:462px;width:97px;height:114px;background:#d7d7d7"></div>
<div class="a" style="left:1292px;top:462px;width:224px;height:114px;background:#d7d7d7"></div>
<div class="a" style="left:1519px;top:462px;width:218px;height:114px;background:#d7d7d7"></div>
<div class="t" style="left:1197px;top:319.0px;font-size:13px;color:#2874b2;font-weight:bold;letter-spacing:0.6px">ases</div>
<div class="t" style="left:1196px;top:376.0px;font-size:13px;color:#111;font-weight:bold;letter-spacing:0.6px">xt Use Cases</div>
<div class="t" style="left:1195px;top:434.0px;font-size:13px;color:#111;font-weight:bold;letter-spacing:0.6px">gically</div>
<div class="t" style="left:1197px;top:468.0px;font-size:13px;color:#2874b2;font-weight:bold;letter-spacing:0.6px">l Analysis</div>
<div class="t" style="left:1196px;top:515.0px;font-size:13px;color:#111;font-weight:bold;letter-spacing:0.6px">rchitecture</div>
<div class="t" style="left:1197px;top:569.0px;font-size:13px;color:#111;font-weight:bold;letter-spacing:0.6px">ving</div>
<div class="t" style="left:1340px;top:319.0px;font-size:13px;color:#2874b2;font-weight:bold;letter-spacing:0.5px">B3 System Context</div>
<svg style="left:1388px;top:344px;" width="30" height="28" viewBox="0 0 30 28"><rect x="0.5" y="0.5" width="29" height="27" fill="#e1d4a4" stroke="#b5a878"/><path d="M23 0.5 L29.5 7 V0.5Z" fill="#fff"/><rect x="10.5" y="5.5" width="9" height="5" fill="#fff" stroke="#333"/><rect x="5.5" y="17.5" width="8" height="6" fill="#fff" stroke="#333"/><rect x="16.5" y="17.5" width="8" height="6" fill="#fff" stroke="#333"/><path d="M15 10.5 V14.5 M9.5 17.5 V14.5 H20.5 V17.5" fill="none" stroke="#333"/></svg>
<div class="t" style="left:1334px;top:376.0px;font-size:13px;color:#111;font-weight:bold;letter-spacing:0.6px">EV Lifecycle Phases</div>
<svg style="left:1391px;top:404px;" width="30" height="28" viewBox="0 0 30 28"><rect x="0.5" y="0.5" width="29" height="27" fill="#e1d4a4" stroke="#b5a878"/><path d="M23 0.5 L29.5 7 V0.5Z" fill="#fff"/><rect x="5.5" y="5.5" width="18" height="18" fill="#fffbe0" stroke="#333"/><rect x="2.5" y="10.5" width="6" height="6" fill="#fff" stroke="#333"/><rect x="13.5" y="10.5" width="6" height="6" fill="#fff" stroke="#333"/><path d="M8.5 13.5 H13.5 M11 6 V21" stroke="#333"/></svg>
<div class="t" style="left:1328px;top:436.0px;font-size:13px;color:#111;font-weight:bold;letter-spacing:0.6px">EV Automotive Context</div>
<div class="t" style="left:1557px;top:319.0px;font-size:13px;color:#2874b2;font-weight:bold;letter-spacing:0.55px">B4 Measurements of</div>
<div class="t" style="left:1583px;top:333.0px;font-size:13px;color:#2874b2;font-weight:bold;letter-spacing:0.55px">Effectiveness</div>
<svg style="left:1609px;top:372px;" width="30" height="28" viewBox="0 0 30 28"><rect x="0.5" y="0.5" width="29" height="27" fill="#e1d4a4" stroke="#b5a878"/><path d="M23 0.5 L29.5 7 V0.5Z" fill="#fff"/><rect x="10.5" y="5.5" width="9" height="5" fill="#fff" stroke="#333"/><rect x="5.5" y="17.5" width="8" height="6" fill="#fff" stroke="#333"/><rect x="16.5" y="17.5" width="8" height="6" fill="#fff" stroke="#333"/><path d="M15 10.5 V14.5 M9.5 17.5 V14.5 H20.5 V17.5" fill="none" stroke="#333"/></svg>
<div class="t" style="left:1593px;top:404.0px;font-size:13px;color:#111;font-weight:bold;letter-spacing:0.6px">EV MOE's</div>
<div class="t" style="left:1326px;top:468.0px;font-size:13px;color:#2874b2;font-weight:bold;letter-spacing:0.55px">W3 Logical Subsystem</div>
<div class="t" style="left:1350px;top:483.0px;font-size:13px;color:#2874b2;font-weight:bold;letter-spacing:0.55px">Communication</div>
<svg style="left:1389px;top:502px;" width="30" height="28" viewBox="0 0 30 28"><rect x="0.5" y="0.5" width="29" height="27" fill="#e1d4a4" stroke="#b5a878"/><path d="M23 0.5 L29.5 7 V0.5Z" fill="#fff"/><rect x="5.5" y="5.5" width="18" height="18" fill="#fffbe0" stroke="#333"/><rect x="2.5" y="10.5" width="6" height="6" fill="#fff" stroke="#333"/><rect x="13.5" y="10.5" width="6" height="6" fill="#fff" stroke="#333"/><path d="M8.5 13.5 H13.5 M11 6 V21" stroke="#333"/></svg>
<div class="t" style="left:1311px;top:534.0px;font-size:13px;color:#111111;font-weight:bold;letter-spacing:0.55px">EV Conceptual Architecture</div>
<svg style="left:1387px;top:549px;" width="28" height="28" viewBox="0 0 28 28"><rect x="0.5" y="0.5" width="27" height="27" fill="#fbf6c0" stroke="#b5a878"/><text x="2" y="10" font-size="9" font-weight="bold" font-family="Liberation Sans" fill="#222">ICD</text><rect x="6.5" y="14.5" width="7" height="5" fill="#fff" stroke="#333"/><rect x="14.5" y="20.5" width="7" height="5" fill="#fff" stroke="#333"/></svg>
<div class="t" style="left:1556px;top:468.0px;font-size:13px;color:#2874b2;font-weight:bold;letter-spacing:0.55px">W4 Measurements of</div>
<div class="t" style="left:1585px;top:483.0px;font-size:13px;color:#2874b2;font-weight:bold;letter-spacing:0.55px">Effectiveness</div>
<svg style="left:1545px;top:499px;" width="30" height="28" viewBox="0 0 30 28"><rect x="0.5" y="0.5" width="29" height="27" fill="#e1d4a4" stroke="#b5a878"/><path d="M23 0.5 L29.5 7 V0.5Z" fill="#fff"/><rect x="10.5" y="5.5" width="9" height="5" fill="#fff" stroke="#333"/><rect x="5.5" y="17.5" width="8" height="6" fill="#fff" stroke="#333"/><rect x="16.5" y="17.5" width="8" height="6" fill="#fff" stroke="#333"/><path d="M15 10.5 V14.5 M9.5 17.5 V14.5 H20.5 V17.5" fill="none" stroke="#333"/></svg>
<svg style="left:1677px;top:499px;" width="30" height="28" viewBox="0 0 30 28"><rect x="0.5" y="0.5" width="29" height="27" fill="#e1d4a4" stroke="#b5a878"/><path d="M23 0.5 L29.5 7 V0.5Z" fill="#fff"/><rect x="6.5" y="5.5" width="16" height="8" rx="3" fill="#fff" stroke="#333"/><circle cx="8" cy="20" r="3" fill="none" stroke="#333"/><path d="M11 20 H20 V14" stroke="#333" fill="none"/></svg>
<div class="t" style="left:1526px;top:530.0px;font-size:13px;color:#111;font-weight:bold;letter-spacing:0.6px">EV Modes</div>
<div class="t" style="left:1659px;top:530.0px;font-size:13px;color:#111;font-weight:bold;letter-spacing:0.6px">EV States</div>
<svg style="left:1607px;top:547px;" width="29" height="30" viewBox="0 0 29 30"><rect x="0.5" y="0.5" width="28" height="29" fill="#fff" stroke="#c99"/><rect x="0.5" y="0.5" width="28" height="6" fill="#e04040"/><path d="M0.5 13 H28.5 M0.5 20 H28.5 M10 6.5 V29.5 M19 6.5 V29.5" stroke="#c99"/></svg>
<div class="a" style="left:1737px;top:149px;width:156px;height:428px;background:#fff"></div>
<div class="a" style="left:581px;top:577px;width:1332px;height:20px;background:#f0f0f0"></div>
<div class="a" style="left:602px;top:578px;width:980px;height:18px;background:#cdcdcd"></div>
<svg style="left:588px;top:581px;" width="6" height="10" viewBox="0 0 6 10"><path d="M5.5 0.5 L1 5 L5.5 9.5" fill="none" stroke="#555" stroke-width="1.5"/></svg>
<svg style="left:1878px;top:581px;" width="6" height="10" viewBox="0 0 6 10"><path d="M0.5 0.5 L5 5 L0.5 9.5" fill="none" stroke="#555" stroke-width="1.5"/></svg>
<div class="a" style="left:1893px;top:577px;width:20px;height:20px;background:#fff"></div>
<div class="a" style="left:580px;top:148px;width:1334px;height:450px;border:1px solid #8a8a8a;border-top-color:#b0b0b0"></div>
<div class="a" style="left:0px;top:602px;width:1920px;height:452px;background:#bddafc"></div>
<div class="a" style="left:4px;top:634px;width:1912px;height:1px;background:#9aaec4"></div>
<svg style="left:4px;top:611px;" width="124" height="24" viewBox="0 0 124 24"><path d="M0 23.5 L28 0.5 H120 Q122.5 0.5 122.5 3 V23.5" fill="url(#gtabA)" stroke="#9aaec4"/></svg>
<svg style="left:37px;top:614px;" width="16" height="16" viewBox="0 0 16 16"><polygon points="13.89,7.42 15.46,8.74 15.18,10.18 13.22,10.79 12.58,11.76 12.76,13.80 11.54,14.61 9.72,13.67 8.58,13.89 7.26,15.46 5.82,15.18 5.21,13.22 4.24,12.58 2.20,12.76 1.39,11.54 2.33,9.72 2.11,8.58 0.54,7.26 0.82,5.82 2.78,5.21 3.42,4.24 3.24,2.20 4.46,1.39 6.28,2.33 7.42,2.11 8.74,0.54 10.18,0.82 10.79,2.78 11.76,3.42 13.80,3.24 14.61,4.46 13.67,6.28" fill="#fff" stroke="#444" stroke-width="1"/><circle cx="8.0" cy="8.0" r="2.4" fill="none" stroke="#444"/></svg>
<div class="t" style="left:60px;top:616.0px;font-size:13px;color:#000;">Simulation</div>
<div class="a" style="left:5px;top:635px;width:1911px;height:2px;background:#f4f9fe"></div>
<div class="a" style="left:5px;top:638px;width:1911px;height:19px;background:linear-gradient(#f2f8fe,#e3f0fc 35%,#b6e2f8 50%,#aadbf5)"></div>
<div class="t" style="left:11px;top:640.5px;font-size:13px;color:#111;">Simulation</div>
<svg style="left:1856px;top:642px;" width="11" height="11" viewBox="0 0 11 11"><path d="M0.5 3 V10.5 H8 M4 7 L10 1 M6 0.5 H10.5 V5" fill="none" stroke="#3b5f8a" stroke-width="1.1"/></svg>
<svg style="left:1876px;top:641px;" width="9" height="12" viewBox="0 0 9 12"><path d="M2 0.5 H7 M3 0.5 V6 M6 0.5 V6 M0.5 6.5 H8.5 M4.5 6.5 V11.5" fill="none" stroke="#3b5f8a" stroke-width="1.2"/></svg>
<svg style="left:1894px;top:643px;" width="10" height="9" viewBox="0 0 10 9"><path d="M0.5 0.5 L9.5 8.5 M9.5 0.5 L0.5 8.5" stroke="#3b5f8a" stroke-width="1.3"/></svg>
<div class="a" style="left:5px;top:657px;width:1911px;height:397px;background:#f0f0f0"></div>
<svg style="left:11px;top:668px;" width="13" height="16" viewBox="0 0 13 16"><rect x="0.5" y="0.5" width="4" height="15" fill="#ccc" stroke="#333"/><rect x="8.5" y="0.5" width="4" height="15" fill="#ccc" stroke="#333"/></svg>
<svg style="left:36px;top:666px;" width="18" height="19" viewBox="0 0 18 19"><path d="M4 1.5 H15 M7 6 H17 M7 9 H17 M7 12 H17 M7 15 H17 M1 4 V10 L5 13" fill="none" stroke="#b8b8b8" stroke-width="1.3"/></svg>
<svg style="left:64px;top:666px;" width="18" height="19" viewBox="0 0 18 19"><path d="M4 1.5 H15 M7 6 H17 M7 9 H17 M7 12 H17 M1 4 V14 L5 17" fill="none" stroke="#b8b8b8" stroke-width="1.3"/></svg>
<div class="a" style="left:93px;top:667px;width:16px;height:16px;background:linear-gradient(135deg,#e82020,#f07070 60%,#e03030);border:1px solid #b03030;border-radius:2px"></div>
<div class="a" style="left:126px;top:662px;width:27px;height:25px;background:linear-gradient(#fbd9a3,#f6bc64 55%,#f8cf84);border:1px solid #e2a85c;border-radius:2px"></div>
<div class="a" style="left:154px;top:662px;width:27px;height:25px;background:linear-gradient(#fbd9a3,#f6bc64 55%,#f8cf84);border:1px solid #e2a85c;border-radius:2px"></div>
<div class="a" style="left:182px;top:662px;width:27px;height:25px;background:linear-gradient(#fbd9a3,#f6bc64 55%,#f8cf84);border:1px solid #e2a85c;border-radius:2px"></div>
<div class="a" style="left:210px;top:662px;width:27px;height:25px;background:linear-gradient(#fbd9a3,#f6bc64 55%,#f8cf84);border:1px solid #e2a85c;border-radius:2px"></div>
<div class="t" style="left:131px;top:670.8px;font-size:12px;color:#333;">&gt;&gt;_</div>
<svg style="left:159px;top:667px;" width="15" height="15" viewBox="0 0 15 15"><polygon points="13.02,6.96 14.47,8.19 14.20,9.53 12.39,10.12 11.79,11.02 11.94,12.91 10.80,13.67 9.11,12.81 8.04,13.02 6.81,14.47 5.47,14.20 4.88,12.39 3.98,11.79 2.09,11.94 1.33,10.80 2.19,9.11 1.98,8.04 0.53,6.81 0.80,5.47 2.61,4.88 3.21,3.98 3.06,2.09 4.20,1.33 5.89,2.19 6.96,1.98 8.19,0.53 9.53,0.80 10.12,2.61 11.02,3.21 12.91,3.06 13.67,4.20 12.81,5.89" fill="#fff" stroke="#444" stroke-width="1"/><circle cx="7.5" cy="7.5" r="2.2" fill="none" stroke="#444"/></svg>
<svg style="left:187px;top:666px;" width="17" height="17" viewBox="0 0 17 17"><rect x="0.5" y="0.5" width="6" height="5" fill="#fff" stroke="#444"/><rect x="8.5" y="5.5" width="6" height="5" fill="#fff" stroke="#444"/><rect x="8.5" y="11.5" width="6" height="5" fill="#fff" stroke="#444"/><path d="M3.5 5.5 V14 H8.5 M3.5 8 H8.5" fill="none" stroke="#444"/></svg>
<svg style="left:215px;top:666px;" width="18" height="17" viewBox="0 0 18 17"><circle cx="5" cy="12" r="4" fill="#aaa" stroke="#555"/><circle cx="13" cy="5" r="4" fill="#ccc" stroke="#555"/></svg>
<svg style="left:244px;top:666px;" width="14" height="18" viewBox="0 0 14 18"><path d="M3 8 V5 Q3 1 7 1 Q11 1 11 5 V8" fill="none" stroke="#444" stroke-width="1.3"/><rect x="1.5" y="8.5" width="11" height="9" fill="#fff" stroke="#444"/><path d="M7 11 V14" stroke="#444" stroke-width="1.5"/></svg>
<svg style="left:270px;top:666px;" width="18" height="18" viewBox="0 0 18 18"><rect x="0.5" y="0.5" width="16" height="12" fill="#fff" stroke="#333"/><rect x="0.5" y="0.5" width="16" height="3" fill="#3b5f9a"/><rect x="6.5" y="6.5" width="11" height="11" fill="#fff" stroke="#333"/><path d="M3 12 H13 M10 9 L13 12 L10 15" stroke="#2a4a80" fill="none" stroke-width="1.3"/></svg>
<svg style="left:306px;top:664px;" width="21" height="22" viewBox="0 0 21 22"><rect x="0.5" y="0.5" width="14" height="20" fill="#fff" stroke="#333"/><path d="M0.5 6.5 H14.5 M0.5 12.5 H14.5" stroke="#333"/><path d="M13 9 L20 15 L13 21Z" fill="#3ab03a"/></svg>
<div class="t" style="left:337px;top:668.6px;font-size:13.5px;color:#111;">Trigger:</div>
<div class="a" style="left:389px;top:662px;width:106px;height:26px;background:#e3e3e3;border:1px solid #acacac"></div>
<svg style="left:395px;top:668px;" width="17" height="13" viewBox="0 0 17 13"><rect x="0.5" y="0.5" width="16" height="12" fill="#f5dca0" stroke="#777"/><text x="6" y="10" font-size="9" font-family="Liberation Sans" fill="#444">S</text></svg>
<div class="t" style="left:417px;top:670.4px;font-size:12.5px;color:#111;">Economy</div>
<svg style="left:480px;top:672px;" width="10" height="6" viewBox="0 0 10 6"><path d="M0.5 0.5 L5 5 L9.5 0.5" fill="none" stroke="#444"/></svg>
<div class="t" style="left:510px;top:669.0px;font-size:13px;color:#111;">Animation speed:</div>
<div class="a" style="left:624px;top:674px;width:50px;height:2px;background:#ddd"></div>
<div class="a" style="left:4px;top:719px;width:632px;height:1px;background:#9aaec4"></div>
<svg style="left:7px;top:696px;" width="133" height="24" viewBox="0 0 133 24"><path d="M0 23.5 L25 0.5 H129 Q131.5 0.5 131.5 3 V23.5" fill="url(#gtabA)" stroke="#9aaec4"/></svg>
<svg style="left:40px;top:699px;" width="16" height="16" viewBox="0 0 16 16"><polygon points="13.89,7.42 15.46,8.74 15.18,10.18 13.22,10.79 12.58,11.76 12.76,13.80 11.54,14.61 9.72,13.67 8.58,13.89 7.26,15.46 5.82,15.18 5.21,13.22 4.24,12.58 2.20,12.76 1.39,11.54 2.33,9.72 2.11,8.58 0.54,7.26 0.82,5.82 2.78,5.21 3.42,4.24 3.24,2.20 4.46,1.39 6.28,2.33 7.42,2.11 8.74,0.54 10.18,0.82 10.79,2.78 11.76,3.42 13.80,3.24 14.61,4.46 13.67,6.28" fill="#fff" stroke="#444" stroke-width="1"/><circle cx="8.0" cy="8.0" r="2.4" fill="none" stroke="#444"/></svg>
<div class="t" style="left:62px;top:700.5px;font-size:13px;color:#000;">Sessions</div>
<svg style="left:121px;top:702px;" width="10" height="10" viewBox="0 0 10 10"><path d="M1 1 L9 9 M9 1 L1 9" stroke="#000" stroke-width="1.8"/></svg>
<div class="a" style="left:7px;top:722px;width:628px;height:325px;background:#fff;border:1px solid #8a9bb0"></div>
<div class="a" style="left:56px;top:723px;width:332px;height:20px;background:#0c6fd8"></div>
<svg style="left:33px;top:724px;" width="19" height="19" viewBox="0 0 19 19"><rect x="0.5" y="0.5" width="18" height="18" fill="#d9c98e" stroke="#777"/><path d="M1 13.5 H18 M1 16 H18" stroke="#555"/><text x="6" y="11" font-size="10" font-family="Liberation Sans" fill="#333">S</text></svg>
<div class="t" style="left:57px;top:727.1px;font-size:12.9px;color:#fff;">Electrical Vehicle [Electrical Vehicle@3973e50b] (Started)</div>
<div class="a" style="left:19px;top:734px;width:13px;height:1px;background:repeating-linear-gradient(90deg,#222 0 1px,transparent 1px 2px)"></div>
<div class="a" style="left:19px;top:734px;width:1px;height:20px;background:repeating-linear-gradient(#222 0 1px,transparent 1px 2px)"></div>
<div class="a" style="left:19px;top:754px;width:13px;height:1px;background:repeating-linear-gradient(90deg,#222 0 1px,transparent 1px 2px)"></div>
<svg style="left:33px;top:745px;" width="19" height="19" viewBox="0 0 19 19"><rect x="0.5" y="0.5" width="18" height="10" rx="1" fill="#fff" stroke="#555"/><rect x="3.5" y="2.5" width="9" height="5" fill="none" stroke="#555"/><circle cx="4" cy="15" r="3" fill="none" stroke="#555"/><path d="M7 15 H16 V11" fill="none" stroke="#555"/></svg>
<div class="t" style="left:57px;top:747.1px;font-size:12.9px;color:#111;">EV States<span style="color:#888">(classifier behavior) [vehicle Mode Analysis@1cbf72f4] (Started)</span></div>
<div class="a" style="left:637px;top:719px;width:636px;height:336px;background:#bddafc"></div>
<div class="a" style="left:636px;top:719px;width:7px;height:336px;background:linear-gradient(90deg,#eef3fa,#d3e3f6)"></div>
<svg style="left:641px;top:705px;" width="25" height="15" viewBox="0 0 25 15"><path d="M0 14.5 L17 0.5 H25 V14.5" fill="#d5e6f8" stroke="#9aaec4"/></svg>
<div class="a" style="left:644px;top:719px;width:632px;height:1px;background:#8a9bb0"></div>
<div class="a" style="left:644px;top:720px;width:632px;height:29px;background:#f0f0f0"></div>
<svg style="left:652px;top:729px;" width="12" height="12" viewBox="0 0 12 12"><path d="M1 11 H11 V7 L6 1 Q4 1 3 3 L1 6Z" fill="none" stroke="#444" stroke-width="1.4"/></svg>
<svg style="left:1238px;top:728px;" width="15" height="15" viewBox="0 0 15 15"><circle cx="7.5" cy="7.5" r="5.1000000000000005" fill="none" stroke="#333" stroke-width="3.3"/><circle cx="7.5" cy="7.5" r="6.6" fill="none" stroke="#333" stroke-width="2.1" stroke-dasharray="3.00 2.17"/></svg>
<svg style="left:1262px;top:734px;" width="7" height="4" viewBox="0 0 7 4"><path d="M0 0 H7 L3.5 4Z" fill="#111"/></svg>
<div class="a" style="left:645px;top:748px;width:628px;height:277px;background:#fff;border:1px solid #9a9a9a"></div>
<div class="a" style="left:646px;top:749px;width:604px;height:275px;overflow:hidden">
<div class="t" style="left:4px;top:-4.0px;font-size:13px;color:#111;">00:00:00,000 : <span style="font-size:16px;letter-spacing:1.7px;margin-left:3px;vertical-align:-2px">****</span> Activity <u style="color:#1a1ae0">Acquire Acceleration Request</u> execution is terminated. <span style="font-size:16px;letter-spacing:1.7px;margin-left:3px;vertical-align:-2px">****</span></div>
<div class="t" style="left:4px;top:12.0px;font-size:13px;color:#111;">00:00:01,037 : <span style="font-size:16px;letter-spacing:1.7px;margin-left:3px;vertical-align:-2px">****</span> Activity <u style="color:#1a1ae0">Acquire Acceleration Request</u> execution is terminated. <span style="font-size:16px;letter-spacing:1.7px;margin-left:3px;vertical-align:-2px">****</span></div>
<div class="t" style="left:4px;top:28.0px;font-size:13px;color:#111;">00:00:02,074 : <span style="font-size:16px;letter-spacing:1.7px;margin-left:3px;vertical-align:-2px">****</span> Activity <u style="color:#1a1ae0">Acquire Acceleration Request</u> execution is terminated. <span style="font-size:16px;letter-spacing:1.7px;margin-left:3px;vertical-align:-2px">****</span></div>
<div class="t" style="left:4px;top:44.0px;font-size:13px;color:#111;">00:00:03,111 : <span style="font-size:16px;letter-spacing:1.7px;margin-left:3px;vertical-align:-2px">****</span> Activity <u style="color:#1a1ae0">Acquire Acceleration Request</u> execution is terminated. <span style="font-size:16px;letter-spacing:1.7px;margin-left:3px;vertical-align:-2px">****</span></div>
<div class="t" style="left:4px;top:60.0px;font-size:13px;color:#111;">00:00:04,148 : <span style="font-size:16px;letter-spacing:1.7px;margin-left:3px;vertical-align:-2px">****</span> Activity <u style="color:#1a1ae0">Acquire Acceleration Request</u> execution is terminated. <span style="font-size:16px;letter-spacing:1.7px;margin-left:3px;vertical-align:-2px">****</span></div>
<div class="t" style="left:4px;top:76.0px;font-size:13px;color:#111;">00:00:05,185 : <span style="font-size:16px;letter-spacing:1.7px;margin-left:3px;vertical-align:-2px">****</span> Activity <u style="color:#1a1ae0">Acquire Acceleration Request</u> execution is terminated. <span style="font-size:16px;letter-spacing:1.7px;margin-left:3px;vertical-align:-2px">****</span></div>
<div class="t" style="left:4px;top:92.0px;font-size:13px;color:#111;">00:00:06,222 : <span style="font-size:16px;letter-spacing:1.7px;margin-left:3px;vertical-align:-2px">****</span> Activity <u style="color:#1a1ae0">Acquire Acceleration Request</u> execution is terminated. <span style="font-size:16px;letter-spacing:1.7px;margin-left:3px;vertical-align:-2px">****</span></div>
<div class="t" style="left:4px;top:108.0px;font-size:13px;color:#111;">00:00:07,259 : <span style="font-size:16px;letter-spacing:1.7px;margin-left:3px;vertical-align:-2px">****</span> Activity <u style="color:#1a1ae0">Acquire Acceleration Request</u> execution is terminated. <span style="font-size:16px;letter-spacing:1.7px;margin-left:3px;vertical-align:-2px">****</span></div>
<div class="t" style="left:4px;top:124.0px;font-size:13px;color:#111;">00:00:08,826 : <span style="font-size:16px;letter-spacing:1.7px;margin-left:3px;vertical-align:-2px">****</span> Activity <u style="color:#1a1ae0">Demand DC to AC</u> execution is terminated. <span style="font-size:16px;letter-spacing:1.7px;margin-left:3px;vertical-align:-2px">****</span></div>
<div class="t" style="left:4px;top:140.0px;font-size:13px;color:#111;">00:00:13,271 : <span style="font-size:16px;letter-spacing:1.7px;margin-left:3px;vertical-align:-2px">****</span> Activity <u style="color:#1a1ae0">Provide Electrical Energy</u> execution is terminated. <span style="font-size:16px;letter-spacing:1.7px;margin-left:3px;vertical-align:-2px">****</span></div>
<div class="t" style="left:4px;top:156.0px;font-size:13px;color:#111;">00:00:19,700 : <span style="font-size:16px;letter-spacing:1.7px;margin-left:3px;vertical-align:-2px">****</span> Activity <u style="color:#1a1ae0">Transfer Torque to wheels</u> execution is terminated. <span style="font-size:16px;letter-spacing:1.7px;margin-left:3px;vertical-align:-2px">****</span></div>
<div class="t" style="left:4px;top:172.0px;font-size:13px;color:#111;">00:00:20,503 : <span style="font-size:16px;letter-spacing:1.7px;margin-left:3px;vertical-align:-2px">****</span> Activity <u style="color:#1a1ae0">EV Functional Architecture</u> execution is terminated. <span style="font-size:16px;letter-spacing:1.7px;margin-left:3px;vertical-align:-2px">****</span></div>
<div class="t" style="left:4px;top:188.0px;font-size:13px;color:#111;">00:00:00,000 : <span style="font-size:16px;letter-spacing:1.7px;margin-left:3px;vertical-align:-2px">****</span> Activity <u style="color:#1a1ae0">EV Functional Architecture</u> is initialized. <span style="font-size:16px;letter-spacing:1.7px;margin-left:3px;vertical-align:-2px">****</span></div>
<div class="t" style="left:4px;top:204.0px;font-size:13px;color:#111;">00:00:00,000 : <span style="font-size:16px;letter-spacing:1.7px;margin-left:3px;vertical-align:-2px">****</span> Activity <u style="color:#1a1ae0">EV Functional Architecture</u> is started! <span style="font-size:16px;letter-spacing:1.7px;margin-left:3px;vertical-align:-2px">****</span></div>
<div class="t" style="left:4px;top:220.0px;font-size:13px;color:#111;">00:00:01,614 : <span style="font-size:16px;letter-spacing:1.7px;margin-left:3px;vertical-align:-2px">****</span> Activity <u style="color:#1a1ae0">Acquire Acceleration Request</u> execution is terminated. <span style="font-size:16px;letter-spacing:1.7px;margin-left:3px;vertical-align:-2px">****</span></div>
<div class="t" style="left:4px;top:236.0px;font-size:13px;color:#111;">00:00:04,018 : <span style="font-size:16px;letter-spacing:1.7px;margin-left:3px;vertical-align:-2px">****</span> Activity <u style="color:#1a1ae0">Analyze Request</u> execution is terminated. <span style="font-size:16px;letter-spacing:1.7px;margin-left:3px;vertical-align:-2px">****</span></div>
<div class="t" style="left:4px;top:252.0px;font-size:13px;color:#111;">00:00:06,424 : <span style="font-size:16px;letter-spacing:1.7px;margin-left:3px;vertical-align:-2px">****</span> Activity <u style="color:#1a1ae0">Generate Rotational Power</u> execution is terminated. <span style="font-size:16px;letter-spacing:1.7px;margin-left:3px;vertical-align:-2px">****</span></div>
<div class="t" style="left:4px;top:268.0px;font-size:13px;color:#111;">00:00:08,826 : <span style="font-size:16px;letter-spacing:1.7px;margin-left:3px;vertical-align:-2px">****</span> Activity <u style="color:#1a1ae0">Demand DC to AC</u> execution is terminated. <span style="font-size:16px;letter-spacing:1.7px;margin-left:3px;vertical-align:-2px">****</span></div>
</div>
<div class="a" style="left:1251px;top:749px;width:21px;height:275px;background:#f0f0f0"></div>
<div class="a" style="left:1252px;top:902px;width:18px;height:27px;background:#cdcdcd"></div>
<svg style="left:1256px;top:756px;" width="10" height="6" viewBox="0 0 10 6"><path d="M0.5 5.5 L5 1 L9.5 5.5" fill="none" stroke="#555" stroke-width="1.5"/></svg>
<svg style="left:1256px;top:1010px;" width="10" height="6" viewBox="0 0 10 6"><path d="M0.5 0.5 L5 5 L9.5 0.5" fill="none" stroke="#555" stroke-width="1.5"/></svg>
<div class="a" style="left:645px;top:1024px;width:507px;height:23px;background:#fff;border:1px solid #9a9a9a"></div>
<div class="t" style="left:649px;top:1030.0px;font-size:13px;color:#111;">&gt;&gt;</div>
<div class="a" style="left:1151px;top:1024px;width:121px;height:23px;background:#e5e5e5;border:1px solid #aaa"></div>
<div class="t" style="left:1156px;top:1030.0px;font-size:13px;color:#111;">(default)</div>
<svg style="left:1256px;top:1032px;" width="10" height="6" viewBox="0 0 10 6"><path d="M0.5 0.5 L5 5 L9.5 0.5" fill="none" stroke="#444"/></svg>
<div class="a" style="left:1272px;top:719px;width:12px;height:335px;background:linear-gradient(90deg,#f0f0f0 0 4px,#e9eff7 4px,#dbe7f5)"></div>
<div class="a" style="left:1284px;top:719px;width:632px;height:1px;background:#9aaec4"></div>
<svg style="left:1427px;top:696px;" width="127" height="24" viewBox="0 0 127 24"><path d="M0.5 23.5 V3 Q0.5 0.5 3 0.5 H123 Q125.5 0.5 125.5 3 V23.5" fill="url(#gtabI)" stroke="#9aaec4"/></svg>
<svg style="left:1286px;top:696px;" width="141" height="24" viewBox="0 0 141 24"><path d="M0 23.5 L25 0.5 H137 Q139.5 0.5 139.5 3 V23.5" fill="url(#gtabA)" stroke="#9aaec4"/></svg>
<svg style="left:1317px;top:699px;" width="16" height="17" viewBox="0 0 16 17"><rect x="0.5" y="0.5" width="6" height="5" fill="#fff" stroke="#444"/><rect x="8.5" y="5.5" width="6" height="5" fill="#fff" stroke="#444"/><rect x="8.5" y="11.5" width="6" height="5" fill="#fff" stroke="#444"/><path d="M3.5 5.5 V14 H8.5 M3.5 8 H8.5" fill="none" stroke="#444"/></svg>
<div class="t" style="left:1340px;top:701.0px;font-size:13px;color:#111;font-weight:bold;">Variables</div>
<svg style="left:1409px;top:703px;" width="9" height="9" viewBox="0 0 9 9"><path d="M1 1 L8 8 M8 1 L1 8" stroke="#000" stroke-width="1.7"/></svg>
<svg style="left:1436px;top:699px;" width="19" height="18" viewBox="0 0 19 18"><circle cx="5" cy="13" r="4" fill="#bbb" stroke="#666"/><circle cx="13.5" cy="5" r="4" fill="#ccc" stroke="#666"/></svg>
<div class="t" style="left:1461px;top:701.0px;font-size:13px;color:#111;">Breakpoints</div>
<svg style="left:1535px;top:703px;" width="9" height="9" viewBox="0 0 9 9"><path d="M1 1 L8 8 M8 1 L1 8" stroke="#000" stroke-width="1.7"/></svg>
<div class="a" style="left:1284px;top:720px;width:632px;height:28px;background:#f0f0f0"></div>
<svg style="left:1289px;top:726px;" width="18" height="18" viewBox="0 0 18 18"><path d="M3 8 Q4 2 10 2 Q13 2 15 4 L13 6 H18 V1 L16 3" fill="#2a6cd0" stroke="#2a6cd0" stroke-width="1.5"/><path d="M15 10 Q14 16 8 16 Q5 16 3 14 L5 12 H0 V17 L2 15" fill="#2a6cd0" stroke="#2a6cd0" stroke-width="1.5"/></svg>
<svg style="left:1318px;top:726px;" width="17" height="17" viewBox="0 0 17 17"><path d="M1 1 H12 L6.5 7Z" fill="none" stroke="#8a8a5a"/><rect x="0.5" y="9.5" width="13" height="7" fill="#e8e4a0" stroke="#8a8a5a"/><path d="M1 12.5 H13" stroke="#8a8a5a"/><path d="M12 3 H17 M14.5 0.5 V5.5" stroke="#666"/></svg>
<svg style="left:1345px;top:726px;" width="15" height="17" viewBox="0 0 15 17"><path d="M1 1 H13 L7 7Z" fill="none" stroke="#8a8a5a"/><rect x="0.5" y="9.5" width="13" height="7" fill="#e8e4a0" stroke="#8a8a5a"/><path d="M1 12.5 H13" stroke="#8a8a5a"/></svg>
<div class="t" style="left:1729px;top:728.5px;font-size:13.6px;color:#111;">Time: 01 : 08 : 00 , 000</div>
<svg style="left:1879px;top:729px;" width="15" height="15" viewBox="0 0 15 15"><circle cx="7.5" cy="7.5" r="5.1000000000000005" fill="none" stroke="#333" stroke-width="3.3"/><circle cx="7.5" cy="7.5" r="6.6" fill="none" stroke="#333" stroke-width="2.1" stroke-dasharray="3.00 2.17"/></svg>
<svg style="left:1903px;top:735px;" width="7" height="4" viewBox="0 0 7 4"><path d="M0 0 H7 L3.5 4Z" fill="#111"/></svg>
<div class="a" style="left:1284px;top:748px;width:628px;height:300px;background:#fff;border:1px solid #9a9a9a"></div>
<div class="a" style="left:1596px;top:749px;width:1px;height:28px;background:#e0e0e0"></div>
<div class="t" style="left:1290px;top:757.0px;font-size:13px;color:#777;">Name</div>
<div class="t" style="left:1602px;top:757.0px;font-size:13px;color:#777;">Value</div>
<div class="a" style="left:1285px;top:777px;width:607px;height:1px;background:#eee"></div>
<div class="a" style="left:1285px;top:778px;width:607px;height:247px;overflow:hidden">
<div class="a" style="left:23px;top:21px;width:1px;height:226px;background:repeating-linear-gradient(#222 0 1px,transparent 1px 2px)"></div>
<div class="a" style="left:40px;top:92px;width:1px;height:155px;background:repeating-linear-gradient(#222 0 1px,transparent 1px 2px)"></div>
<div class="a" style="left:0px;top:22px;width:607px;height:1px;background:#f0f0f0"></div>
<svg style="left:2px;top:7px;" width="12" height="12" viewBox="0 0 12 12"><rect x="0.5" y="0.5" width="11" height="11" fill="#fff" stroke="#555"/><path d="M3 6 H9" stroke="#222" stroke-width="1.2"/></svg>
<svg style="left:18px;top:2px;" width="19" height="18" viewBox="0 0 19 18"><rect x="0.5" y="0.5" width="18" height="17" fill="#d9c98e" stroke="#777"/><path d="M1 12.5 H18 M1 15 H18" stroke="#555"/><text x="6" y="10" font-size="10" font-family="Liberation Sans" fill="#333">S</text></svg>
<div class="t" style="left:41px;top:5.2px;font-size:12.8px;color:#111;">Electrical Vehicle</div>
<div class="t" style="left:314px;top:5.2px;font-size:12.8px;color:#111;">Electrical Vehicle@3973e50b</div>
<div class="a" style="left:0px;top:45px;width:607px;height:1px;background:#f0f0f0"></div>
<svg style="left:18px;top:30px;" width="12" height="12" viewBox="0 0 12 12"><rect x="0.5" y="0.5" width="11" height="11" fill="url(#gexp)" stroke="#555"/><path d="M3 6 H9 M6 3 V9" stroke="#222" stroke-width="1.2"/></svg>
<svg style="left:34px;top:27px;" width="19" height="15" viewBox="0 0 19 15"><rect x="0.5" y="0.5" width="18" height="14" fill="#f6f1b8" stroke="#666"/><text x="9" y="12" font-size="11" font-family="Liberation Sans" fill="#333">P</text></svg>
<div class="t" style="left:57px;top:28.2px;font-size:12.8px;color:#111;">battery Cooling Subsystem : Battery Cooli...</div>
<div class="t" style="left:314px;top:28.2px;font-size:12.8px;color:#111;">Battery Cooling Subsystem@5b4b78e4</div>
<div class="a" style="left:0px;top:68px;width:607px;height:1px;background:#f0f0f0"></div>
<svg style="left:18px;top:53px;" width="12" height="12" viewBox="0 0 12 12"><rect x="0.5" y="0.5" width="11" height="11" fill="url(#gexp)" stroke="#555"/><path d="M3 6 H9 M6 3 V9" stroke="#222" stroke-width="1.2"/></svg>
<svg style="left:34px;top:50px;" width="19" height="15" viewBox="0 0 19 15"><rect x="0.5" y="0.5" width="18" height="14" fill="#f6f1b8" stroke="#666"/><text x="9" y="12" font-size="11" font-family="Liberation Sans" fill="#333">P</text></svg>
<div class="t" style="left:57px;top:51.2px;font-size:12.8px;color:#111;">battery Subsystem : Battery Subsystem</div>
<div class="t" style="left:314px;top:51.2px;font-size:12.8px;color:#111;">Battery Subsystem@554fa602</div>
<div class="a" style="left:0px;top:69px;width:311px;height:22px;background:#0c6fd8"></div>
<div class="a" style="left:312px;top:69px;width:295px;height:22px;border-top:1px dotted #333;border-bottom:1px dotted #333;border-left:1px dotted #333"></div>
<div class="a" style="left:0px;top:91px;width:607px;height:1px;background:#f0f0f0"></div>
<svg style="left:18px;top:76px;" width="12" height="12" viewBox="0 0 12 12"><rect x="0.5" y="0.5" width="11" height="11" fill="#fff" stroke="#555"/><path d="M3 6 H9" stroke="#222" stroke-width="1.2"/></svg>
<svg style="left:34px;top:73px;" width="19" height="15" viewBox="0 0 19 15"><rect x="0.5" y="0.5" width="18" height="14" fill="#f6f1b8" stroke="#666"/><text x="9" y="12" font-size="11" font-family="Liberation Sans" fill="#333">P</text></svg>
<div class="t" style="left:57px;top:74.2px;font-size:12.8px;color:#fff;">display : vehicle Mode Analysis [Sports, R...</div>
<div class="t" style="left:314px;top:74.2px;font-size:12.8px;color:#111;">vehicle Mode Analysis@1cbf72f4</div>
<div class="a" style="left:0px;top:114px;width:607px;height:1px;background:#f0f0f0"></div>
<svg style="left:50px;top:96px;" width="19" height="15" viewBox="0 0 19 15"><rect x="0.5" y="0.5" width="18" height="14" fill="#f6f1b8" stroke="#666"/><text x="9" y="12" font-size="11" font-family="Liberation Sans" fill="#333">V</text></svg>
<div class="t" style="left:73px;top:97.2px;font-size:12.8px;color:#111;">BatteryCapacity : Integer</div>
<div class="t" style="left:314px;top:97.2px;font-size:12.8px;color:#111;">48000</div>
<div class="a" style="left:0px;top:137px;width:607px;height:1px;background:#f0f0f0"></div>
<svg style="left:50px;top:119px;" width="19" height="15" viewBox="0 0 19 15"><rect x="0.5" y="0.5" width="18" height="14" fill="#f6f1b8" stroke="#666"/><text x="9" y="12" font-size="11" font-family="Liberation Sans" fill="#333">V</text></svg>
<div class="t" style="left:73px;top:120.2px;font-size:12.8px;color:#111;">Km : Integer</div>
<div class="t" style="left:314px;top:120.2px;font-size:12.8px;color:#111;">274</div>
<div class="a" style="left:0px;top:160px;width:607px;height:1px;background:#f0f0f0"></div>
<svg style="left:50px;top:142px;" width="19" height="15" viewBox="0 0 19 15"><rect x="0.5" y="0.5" width="18" height="14" fill="#f6f1b8" stroke="#666"/><text x="9" y="12" font-size="11" font-family="Liberation Sans" fill="#333">V</text></svg>
<div class="t" style="left:73px;top:143.2px;font-size:12.8px;color:#111;">PU : Integer</div>
<div class="t" style="left:314px;top:143.2px;font-size:12.8px;color:#111;">175</div>
<div class="a" style="left:0px;top:183px;width:607px;height:1px;background:#f0f0f0"></div>
<svg style="left:50px;top:165px;" width="19" height="15" viewBox="0 0 19 15"><rect x="0.5" y="0.5" width="18" height="14" fill="#f6f1b8" stroke="#666"/><text x="9" y="12" font-size="11" font-family="Liberation Sans" fill="#333">V</text></svg>
<div class="t" style="left:73px;top:166.2px;font-size:12.8px;color:#111;">Range : Integer</div>
<div class="t" style="left:314px;top:166.2px;font-size:12.8px;color:#111;">188</div>
<div class="a" style="left:0px;top:206px;width:607px;height:1px;background:#f0f0f0"></div>
<svg style="left:50px;top:188px;" width="19" height="15" viewBox="0 0 19 15"><rect x="0.5" y="0.5" width="18" height="14" fill="#f6f1b8" stroke="#666"/><text x="9" y="12" font-size="11" font-family="Liberation Sans" fill="#333">V</text></svg>
<div class="t" style="left:73px;top:189.2px;font-size:12.8px;color:#111;">UP : Integer</div>
<div class="t" style="left:314px;top:189.2px;font-size:12.8px;color:#111;">33031</div>
<div class="a" style="left:0px;top:229px;width:607px;height:1px;background:#f0f0f0"></div>
<svg style="left:34px;top:214px;" width="12" height="12" viewBox="0 0 12 12"><rect x="0.5" y="0.5" width="11" height="11" fill="url(#gexp)" stroke="#555"/><path d="M3 6 H9 M6 3 V9" stroke="#222" stroke-width="1.2"/></svg>
<svg style="left:50px;top:211px;" width="19" height="15" viewBox="0 0 19 15"><rect x="0.5" y="0.5" width="18" height="14" fill="#f6f1b8" stroke="#666"/><text x="9" y="12" font-size="11" font-family="Liberation Sans" fill="#333">C</text></svg>
<div class="t" style="left:73px;top:212.2px;font-size:12.8px;color:#111;"> : Range Calcualtions <span style="color:#999">{Range = UP / PU}</span></div>
<div class="t" style="left:314px;top:212.2px;font-size:12.8px;color:#111;">Range Calcualtions@3c94d164</div>
<div class="a" style="left:0px;top:252px;width:607px;height:1px;background:#f0f0f0"></div>
<svg style="left:34px;top:237px;" width="12" height="12" viewBox="0 0 12 12"><rect x="0.5" y="0.5" width="11" height="11" fill="url(#gexp)" stroke="#555"/><path d="M3 6 H9 M6 3 V9" stroke="#222" stroke-width="1.2"/></svg>
<svg style="left:50px;top:234px;" width="19" height="15" viewBox="0 0 19 15"><rect x="0.5" y="0.5" width="18" height="14" fill="#f6f1b8" stroke="#666"/><text x="9" y="12" font-size="11" font-family="Liberation Sans" fill="#333">C</text></svg>
<div class="t" style="left:73px;top:235.2px;font-size:12.8px;color:#111;"> : Kilometers <span style="color:#999">{Km = BatteryCapacity/PU}</span></div>
<div class="t" style="left:314px;top:235.2px;font-size:12.8px;color:#111;">Kilometers@5ca7e822</div>
<div class="a" style="left:41px;top:103px;width:9px;height:1px;background:repeating-linear-gradient(90deg,#222 0 1px,transparent 1px 2px)"></div>
<div class="a" style="left:41px;top:126px;width:9px;height:1px;background:repeating-linear-gradient(90deg,#222 0 1px,transparent 1px 2px)"></div>
<div class="a" style="left:41px;top:149px;width:9px;height:1px;background:repeating-linear-gradient(90deg,#222 0 1px,transparent 1px 2px)"></div>
<div class="a" style="left:41px;top:172px;width:9px;height:1px;background:repeating-linear-gradient(90deg,#222 0 1px,transparent 1px 2px)"></div>
<div class="a" style="left:41px;top:195px;width:9px;height:1px;background:repeating-linear-gradient(90deg,#222 0 1px,transparent 1px 2px)"></div>
<div class="a" style="left:41px;top:218px;width:9px;height:1px;background:repeating-linear-gradient(90deg,#222 0 1px,transparent 1px 2px)"></div>
<div class="a" style="left:41px;top:241px;width:9px;height:1px;background:repeating-linear-gradient(90deg,#222 0 1px,transparent 1px 2px)"></div>
</div>
<div class="a" style="left:1892px;top:778px;width:19px;height:247px;background:#f0f0f0"></div>
<div class="a" style="left:1893px;top:799px;width:17px;height:120px;background:#cdcdcd"></div>
<svg style="left:1897px;top:785px;" width="10" height="6" viewBox="0 0 10 6"><path d="M0.5 5.5 L5 1 L9.5 5.5" fill="none" stroke="#555" stroke-width="1.5"/></svg>
<svg style="left:1897px;top:1010px;" width="10" height="6" viewBox="0 0 10 6"><path d="M0.5 0.5 L5 5 L9.5 0.5" fill="none" stroke="#555" stroke-width="1.5"/></svg>
<div class="a" style="left:1285px;top:1025px;width:626px;height:22px;background:#f0f0f0"></div>
<div class="a" style="left:1306px;top:1026px;width:545px;height:19px;background:#cdcdcd"></div>
<svg style="left:1292px;top:1030px;" width="6" height="10" viewBox="0 0 6 10"><path d="M5.5 0.5 L1 5 L5.5 9.5" fill="none" stroke="#555" stroke-width="1.5"/></svg>
<svg style="left:1877px;top:1030px;" width="6" height="10" viewBox="0 0 6 10"><path d="M0.5 0.5 L5 5 L0.5 9.5" fill="none" stroke="#555" stroke-width="1.5"/></svg>
<div class="a" style="left:1916px;top:602px;width:4px;height:452px;background:#bddafc"></div>
<div class="a" style="left:0px;top:1053px;width:1920px;height:1px;background:#9db4cc"></div>
<div class="a" style="left:0px;top:1054px;width:1920px;height:26px;background:linear-gradient(#d4e6fb,#bcd7f7);"></div>
<div class="a" style="left:0px;top:1058px;width:1920px;height:18px;background:repeating-linear-gradient(90deg,rgba(150,180,220,.18) 0 1px,transparent 1px 3px)"></div>
<div class="t" style="left:5px;top:1061.4px;font-size:12.5px;color:#111;">Ready</div>
<div class="a" style="left:1447px;top:1055px;width:1px;height:24px;background:#a9bdd3"></div>
<svg style="left:1461px;top:1058px;" width="19" height="19" viewBox="0 0 19 19"><circle cx="7.5" cy="7.5" r="6.5" fill="#fff" stroke="#333" stroke-width="1.3"/><path d="M12 12 L18 18" stroke="#2a3f7a" stroke-width="2.8"/><path d="M4.5 7.5 H10.5" stroke="#333"/></svg>
<div class="a" style="left:1490px;top:1065px;width:190px;height:2px;background:#d3dfec"></div>
<div class="a" style="left:1566px;top:1056px;width:4px;height:20px;background:#1f5fd0"></div>
<svg style="left:1690px;top:1058px;" width="19" height="19" viewBox="0 0 19 19"><circle cx="7.5" cy="7.5" r="6.5" fill="#fff" stroke="#333" stroke-width="1.3"/><path d="M12 12 L18 18" stroke="#2a3f7a" stroke-width="2.8"/><path d="M4.5 7.5 H10.5 M7.5 4.5 V10.5" stroke="#333"/></svg>
<div class="a" style="left:1713px;top:1055px;width:54px;height:24px;background:#fff;border:1px solid #b5c3d3"></div>
<div class="t" style="left:1716px;top:1061.0px;font-size:13px;color:#000;">85%</div>
<svg style="left:1751px;top:1064px;" width="10" height="6" viewBox="0 0 10 6"><path d="M0.5 0.5 L5 5 L9.5 0.5" fill="none" stroke="#333"/></svg>
<svg style="left:1774px;top:1058px;" width="19" height="19" viewBox="0 0 19 19"><circle cx="7.5" cy="7.5" r="6.5" fill="#fff" stroke="#333" stroke-width="1.3"/><path d="M12 12 L18 18" stroke="#2a3f7a" stroke-width="2.8"/><rect x="4" y="4" width="7" height="7" fill="none" stroke="#333"/></svg>
<svg style="left:1802px;top:1058px;" width="19" height="19" viewBox="0 0 19 19"><circle cx="7.5" cy="7.5" r="6.5" fill="#fff" stroke="#333" stroke-width="1.3"/><path d="M12 12 L18 18" stroke="#2a3f7a" stroke-width="2.8"/><text x="3" y="10" font-size="7" font-family="Liberation Sans" fill="#333">1:1</text></svg>
<div class="a" style="left:1835px;top:1055px;width:1px;height:24px;background:#a9bdd3"></div>
<svg style="left:1842px;top:1057px;" width="20" height="20" viewBox="0 0 20 20"><rect x="0.5" y="0.5" width="15" height="13" fill="#ddd" stroke="#999"/><rect x="4.5" y="5.5" width="15" height="13" fill="#e8e8e8" stroke="#999"/></svg>
<div class="a" style="left:1869px;top:1055px;width:1px;height:24px;background:#a9bdd3"></div>
<svg style="left:1884px;top:1059px;" width="16" height="16" viewBox="0 0 16 16"><circle cx="8.0" cy="8.0" r="5.44" fill="none" stroke="#bbb" stroke-width="3.5"/><circle cx="8.0" cy="8.0" r="7.04" fill="none" stroke="#bbb" stroke-width="2.2" stroke-dasharray="3.20 2.32"/></svg>
<div class="a" style="left:664px;top:156px;width:531px;height:727px;background:#efefef;border-top:1px solid #fff;box-shadow:1px 1px 0 #555"></div>
<div class="a" style="left:662px;top:186px;width:4px;height:696px;background:#f7f7f7"></div>
<div class="a" style="left:1193px;top:157px;width:2px;height:724px;background:#f6f6f6"></div>
<div class="a" style="left:1195px;top:157px;width:1px;height:726px;background:#6a6a6a"></div>
<div class="a" style="left:664px;top:881px;width:533px;height:2px;background:#6a6a6a"></div>
<svg style="left:672px;top:161px;" width="102" height="27" viewBox="0 0 102 27"><path d="M0 26.5 L24 0.5 H98 Q101 0.5 101 3 V26.5" fill="url(#gtabO)" stroke="#999"/></svg>
<svg style="left:701px;top:166px;" width="16" height="16" viewBox="0 0 16 16"><polygon points="13.89,7.42 15.46,8.74 15.18,10.18 13.22,10.79 12.58,11.76 12.76,13.80 11.54,14.61 9.72,13.67 8.58,13.89 7.26,15.46 5.82,15.18 5.21,13.22 4.24,12.58 2.20,12.76 1.39,11.54 2.33,9.72 2.11,8.58 0.54,7.26 0.82,5.82 2.78,5.21 3.42,4.24 3.24,2.20 4.46,1.39 6.28,2.33 7.42,2.11 8.74,0.54 10.18,0.82 10.79,2.78 11.76,3.42 13.80,3.24 14.61,4.46 13.67,6.28" fill="#fff" stroke="#555" stroke-width="1"/><circle cx="8.0" cy="8.0" r="2.4" fill="none" stroke="#555"/></svg>
<div class="t" style="left:724px;top:168.0px;font-size:13px;color:#111;">Vehicle</div>
<div class="a" style="left:666px;top:186px;width:527px;height:695px;background:#f3dcaa;border:1px solid #c6a468"></div>
<div class="a" style="left:669px;top:189px;width:521px;height:689px;background:#e9e9eb;border:1px solid #cfb27a"></div>
<div class="a" style="left:669px;top:189px;width:521px;height:21px;background:linear-gradient(#fdf0c4,#fbd77f 40%,#f8c44c 75%,#f9c95a)"></div>
<div class="t" style="left:676px;top:192.5px;font-size:13px;color:#111;">Vehicle</div>
<svg style="left:1167px;top:195px;" width="9" height="9" viewBox="0 0 9 9"><path d="M0.5 0.5 L8.5 8.5 M8.5 0.5 L0.5 8.5" stroke="#3b4a6a" stroke-width="1.4"/></svg>
<div class="a" style="left:670px;top:210px;width:6px;height:222px;background:#f7f7f7"></div>
<div class="a" style="left:675px;top:210px;width:477px;height:222px;background:#000;border:3px solid #0b2e0b;border-top:0"></div>
<svg style="left:687px;top:217px;" width="50" height="38" viewBox="0 0 50 38"><path d="M25 0 L33 9 H29 V12 H21 V9 H17Z M25 38 L33 29 H29 V26 H21 V29 H17Z M0 19 L9 11 V15 H12 V23 H9 V27Z M50 19 L41 11 V15 H38 V23 H41 V27Z" fill="#fff"/></svg>
<div class="a" style="left:760px;top:247px;width:307px;height:145px;background:#000;border:3px solid #fff"></div>
<div class="a" style="left:763px;top:250px;width:301px;height:34px;background:linear-gradient(#4a4a4a,#9a9a9a 30%,#b8b8b8 50%,#8a8a8a 70%,#1a1a1a)"></div>
<div class="t" style="left:880px;top:256.9px;font-size:19px;color:#f2f2f2;transform:scaleX(0.81);transform-origin:0 0;">Drive Mode</div>
<div class="a" style="left:800px;top:300px;width:48px;height:48px;background:linear-gradient(135deg,#e8e8e8,#b9b9b9);border:2px solid;border-color:#f5f5f5 #8a8a8a #8a8a8a #f5f5f5"></div><svg style="left:808px;top:306px;" width="32" height="39" viewBox="0 0 32 39"><g transform="scale(0.72)"><path d="M18 53 Q17 42 22 34 Q27 27 33 22" fill="none" stroke="#3f9a3f" stroke-width="2.6"/><path d="M20 38 Q8 40 1 30 Q10 22 19 28 Q22 32 20 38Z" fill="#3f9a3f"/><path d="M23 33 Q14 20 22 10 Q30 3 42 0 Q45 14 39 24 Q33 34 23 33Z" fill="#3f9a3f"/><path d="M24 31 Q32 20 38 7 M29 24 L35 22 M27 20 L28 14 M32 16 L37 15" fill="none" stroke="#e5f2e0" stroke-width="1.2"/></g></svg>
<div class="a" style="left:889px;top:300px;width:48px;height:48px;background:linear-gradient(135deg,#e8e8e8,#b9b9b9);border:2px solid;border-color:#f5f5f5 #8a8a8a #8a8a8a #f5f5f5"></div><svg style="left:897px;top:312px;" width="33" height="27" viewBox="0 0 33 27"><g transform="scale(0.97)"><path d="M6 2 Q7 0 10 0 H24 Q27 0 28 2 L30.5 8 H33 Q34 8 34 9.5 V10.5 L32 11.5 Q34 13.5 34 17 V23 H31.5 V26.5 H26 V23 H8 V26.5 H2.5 V23 H0 V17 Q0 13.5 2 11.5 L0 10.5 V9.5 Q0 8 1 8 H3.5Z" fill="#000"/><path d="M8 4 Q8.5 2 11 2 H23 Q25.5 2 26 4 L28 9.5 H6Z" fill="#fff"/><path d="M1.5 15 Q5 15 9 17.5 L8 19.5 Q3 19.5 1.5 17.5Z M32.5 15 Q29 15 25 17.5 L26 19.5 Q31 19.5 32.5 17.5Z" fill="#fff"/></g></svg>
<div class="a" style="left:978px;top:300px;width:48px;height:48px;background:linear-gradient(135deg,#f9c39c,#f4a877);border:2px solid;border-color:#f5f5f5 #8a8a8a #8a8a8a #f5f5f5"></div>
<div class="t" style="left:1002px;top:307.2px;font-size:34px;color:#000;font-weight:bold;font-family:'Liberation Serif';font-style:italic;font-weight:bold;transform:translateX(-50%);-webkit-text-stroke:1.3px #000;">S</div>
<div class="t" style="left:968px;top:359.9px;font-size:22px;color:#f1b42a;font-weight:bold;transform:scaleX(0.84);transform-origin:0 0;">SPORTS</div>
<div class="a" style="left:670px;top:432px;width:508px;height:111px;background:#ebebeb"></div>
<div class="a" style="left:730px;top:445px;width:362px;height:91px;background:#f2f2f2"></div>
<div class="a" style="left:760px;top:453px;width:96px;height:75px;background:#e4e4e5;border:1px solid #adadad"></div>
<svg style="left:785px;top:465px;" width="45" height="55" viewBox="0 0 45 55"><g transform="scale(1.0)"><path d="M18 53 Q17 42 22 34 Q27 27 33 22" fill="none" stroke="#3f9a3f" stroke-width="2.6"/><path d="M20 38 Q8 40 1 30 Q10 22 19 28 Q22 32 20 38Z" fill="#3f9a3f"/><path d="M23 33 Q14 20 22 10 Q30 3 42 0 Q45 14 39 24 Q33 34 23 33Z" fill="#3f9a3f"/><path d="M24 31 Q32 20 38 7 M29 24 L35 22 M27 20 L28 14 M32 16 L37 15" fill="none" stroke="#e5f2e0" stroke-width="1.2"/></g></svg>
<div class="a" style="left:879px;top:453px;width:96px;height:75px;background:#e4e4e5;border:1px solid #adadad"></div>
<svg style="left:910px;top:477px;" width="35" height="28" viewBox="0 0 35 28"><g transform="scale(1.0)"><path d="M6 2 Q7 0 10 0 H24 Q27 0 28 2 L30.5 8 H33 Q34 8 34 9.5 V10.5 L32 11.5 Q34 13.5 34 17 V23 H31.5 V26.5 H26 V23 H8 V26.5 H2.5 V23 H0 V17 Q0 13.5 2 11.5 L0 10.5 V9.5 Q0 8 1 8 H3.5Z" fill="#000"/><path d="M8 4 Q8.5 2 11 2 H23 Q25.5 2 26 4 L28 9.5 H6Z" fill="#fff"/><path d="M1.5 15 Q5 15 9 17.5 L8 19.5 Q3 19.5 1.5 17.5Z M32.5 15 Q29 15 25 17.5 L26 19.5 Q31 19.5 32.5 17.5Z" fill="#fff"/></g></svg>
<div class="a" style="left:998px;top:453px;width:89px;height:75px;background:#e7e7e8;border:2px solid #1a80d8"></div>
<div class="a" style="left:1001px;top:456px;width:83px;height:69px;border:1px dotted #222"></div>
<div class="t" style="left:1042px;top:471.4px;font-size:35px;color:#000;font-weight:bold;font-family:'Liberation Serif';font-style:italic;font-weight:bold;transform:translateX(-50%);-webkit-text-stroke:1.4px #000;">S</div>
<div class="a" style="left:670px;top:543px;width:509px;height:49px;background:#3c3c3c"></div>
<div class="t" style="left:676px;top:564.0px;font-size:17.7px;color:#fff;">Battery Capacity:</div>
<div class="a" style="left:822px;top:557px;width:112px;height:27px;background:#fff;border:1px solid #999"></div>
<div class="t" style="left:826px;top:562.6px;font-size:17px;color:#000;">48000</div>
<div class="t" style="left:976px;top:557.9px;font-size:17.8px;color:#fff;">Power Usage:</div>
<div class="t" style="left:1103px;top:558.6px;font-size:17px;color:#fff;">175</div>
<div class="a" style="left:670px;top:592px;width:508px;height:40px;background:#ebebeb"></div>
<div class="a" style="left:670px;top:607px;width:508px;height:24px;background:#eeeeee"></div>
<svg style="left:673px;top:609px;" width="19" height="20" viewBox="0 0 19 20"><rect x="0.5" y="0.5" width="17" height="19" fill="#fff" stroke="#666"/><text x="3" y="9" font-size="7" font-family="Liberation Sans" fill="#333">TSV</text><text x="3" y="17" font-size="7" font-family="Liberation Sans" fill="#333">CSV</text><rect x="0" y="0" width="5" height="19" fill="#5a8ad0" opacity=".5"/></svg>
<svg style="left:700px;top:609px;" width="19" height="19" viewBox="0 0 19 19"><path d="M2 1 H14 L8 8Z" fill="none" stroke="#888"/><rect x="1.5" y="10.5" width="13" height="7" fill="#e8e4a0" stroke="#8a8a5a"/><path d="M2 13.5 H14" stroke="#8a8a5a"/><path d="M13 4 H18 M15.5 1.5 V6.5" stroke="#666"/></svg>
<svg style="left:727px;top:609px;" width="21" height="19" viewBox="0 0 21 19"><path d="M1 18 L6 13 M8 12 L10 14 M12 13 L15 9 M17 8 L20 5" stroke="#d02020" stroke-width="2"/><path d="M3 4 H9 M6 1 V7" stroke="#333" stroke-width="1.5"/></svg>
<div class="a" style="left:670px;top:631px;width:508px;height:220px;background:#fff"></div>
<div class="a" style="left:670px;top:851px;width:508px;height:25px;background:#e8e8e8"></div>
<div class="t" style="left:923px;top:635.2px;font-size:21px;color:#000;font-weight:bold;transform:translateX(-50%);">PU</div>
<svg style="left:670px;top:631px;" width="508" height="220" viewBox="0 0 508 220"><rect x="57.5" y="38.5" width="439.0" height="114.0" fill="#fff" stroke="#aaa"/><path d="M86.3 38.5 V152.5" stroke="#dadada" stroke-dasharray="2 2"/><path d="M116.7 38.5 V152.5" stroke="#dadada" stroke-dasharray="2 2"/><path d="M147.0 38.5 V152.5" stroke="#dadada" stroke-dasharray="2 2"/><path d="M177.3 38.5 V152.5" stroke="#dadada" stroke-dasharray="2 2"/><path d="M207.7 38.5 V152.5" stroke="#dadada" stroke-dasharray="2 2"/><path d="M238.0 38.5 V152.5" stroke="#dadada" stroke-dasharray="2 2"/><path d="M268.3 38.5 V152.5" stroke="#dadada" stroke-dasharray="2 2"/><path d="M298.7 38.5 V152.5" stroke="#dadada" stroke-dasharray="2 2"/><path d="M329.0 38.5 V152.5" stroke="#dadada" stroke-dasharray="2 2"/><path d="M359.3 38.5 V152.5" stroke="#dadada" stroke-dasharray="2 2"/><path d="M389.7 38.5 V152.5" stroke="#dadada" stroke-dasharray="2 2"/><path d="M420.0 38.5 V152.5" stroke="#dadada" stroke-dasharray="2 2"/><path d="M450.4 38.5 V152.5" stroke="#dadada" stroke-dasharray="2 2"/><path d="M57.5 121.5 H496.5" stroke="#dadada" stroke-dasharray="2 2"/><path d="M57.5 90.4 H496.5" stroke="#dadada" stroke-dasharray="2 2"/><path d="M57.5 59.3 H496.5" stroke="#dadada" stroke-dasharray="2 2"/><path d="M52.5 38.5 V152.5" stroke="#999"/><path d="M50 152.6 H52.5" stroke="#999"/><text x="46" y="156.6" font-size="11" text-anchor="end" font-family="Liberation Sans" fill="#333">0</text><path d="M50 121.5 H52.5" stroke="#999"/><text x="46" y="125.5" font-size="11" text-anchor="end" font-family="Liberation Sans" fill="#333">50</text><path d="M50 90.4 H52.5" stroke="#999"/><text x="46" y="94.4" font-size="11" text-anchor="end" font-family="Liberation Sans" fill="#333">100</text><path d="M50 59.3 H52.5" stroke="#999"/><text x="46" y="63.3" font-size="11" text-anchor="end" font-family="Liberation Sans" fill="#333">150</text><path d="M57.5 157.5 H496.5" stroke="#999"/><path d="M56.0 157.5 V160" stroke="#999"/><text x="56.0" y="172.5" font-size="11" text-anchor="middle" font-family="Liberation Sans" fill="#333">0</text><path d="M86.3 157.5 V160" stroke="#999"/><text x="86.3" y="172.5" font-size="11" text-anchor="middle" font-family="Liberation Sans" fill="#333">5</text><path d="M116.7 157.5 V160" stroke="#999"/><text x="116.7" y="172.5" font-size="11" text-anchor="middle" font-family="Liberation Sans" fill="#333">10</text><path d="M147.0 157.5 V160" stroke="#999"/><text x="147.0" y="172.5" font-size="11" text-anchor="middle" font-family="Liberation Sans" fill="#333">15</text><path d="M177.3 157.5 V160" stroke="#999"/><text x="177.3" y="172.5" font-size="11" text-anchor="middle" font-family="Liberation Sans" fill="#333">20</text><path d="M207.7 157.5 V160" stroke="#999"/><text x="207.7" y="172.5" font-size="11" text-anchor="middle" font-family="Liberation Sans" fill="#333">25</text><path d="M238.0 157.5 V160" stroke="#999"/><text x="238.0" y="172.5" font-size="11" text-anchor="middle" font-family="Liberation Sans" fill="#333">30</text><path d="M268.3 157.5 V160" stroke="#999"/><text x="268.3" y="172.5" font-size="11" text-anchor="middle" font-family="Liberation Sans" fill="#333">35</text><path d="M298.7 157.5 V160" stroke="#999"/><text x="298.7" y="172.5" font-size="11" text-anchor="middle" font-family="Liberation Sans" fill="#333">40</text><path d="M329.0 157.5 V160" stroke="#999"/><text x="329.0" y="172.5" font-size="11" text-anchor="middle" font-family="Liberation Sans" fill="#333">45</text><path d="M359.3 157.5 V160" stroke="#999"/><text x="359.3" y="172.5" font-size="11" text-anchor="middle" font-family="Liberation Sans" fill="#333">50</text><path d="M389.7 157.5 V160" stroke="#999"/><text x="389.7" y="172.5" font-size="11" text-anchor="middle" font-family="Liberation Sans" fill="#333">55</text><path d="M420.0 157.5 V160" stroke="#999"/><text x="420.0" y="172.5" font-size="11" text-anchor="middle" font-family="Liberation Sans" fill="#333">60</text><path d="M450.4 157.5 V160" stroke="#999"/><text x="450.4" y="172.5" font-size="11" text-anchor="middle" font-family="Liberation Sans" fill="#333">65</text><path d="M480.7 157.5 V160" stroke="#999"/><text x="480.7" y="172.5" font-size="11" text-anchor="middle" font-family="Liberation Sans" fill="#333">70</text><text x="276" y="188" font-size="12" font-weight="bold" text-anchor="middle" font-family="Liberation Sans" fill="#111">time(min)</text><text transform="translate(20,95) rotate(-90)" font-size="11" font-weight="bold" text-anchor="middle" font-family="Liberation Sans" fill="#111">PU</text><path d="M57.5 52.3 L250.0 52.3 L256.5 60.0 L438.0 60.0 L444.5 43.3 L474.5 43.3" fill="none" stroke="#b73a55" stroke-width="3.2" stroke-linejoin="round"/><path d="M237 208.5 H251" stroke="#b73a55" stroke-width="3.2"/><text x="255" y="212.5" font-size="11" font-weight="bold" font-family="Liberation Sans" fill="#111">PU</text></svg>
</body></html>
